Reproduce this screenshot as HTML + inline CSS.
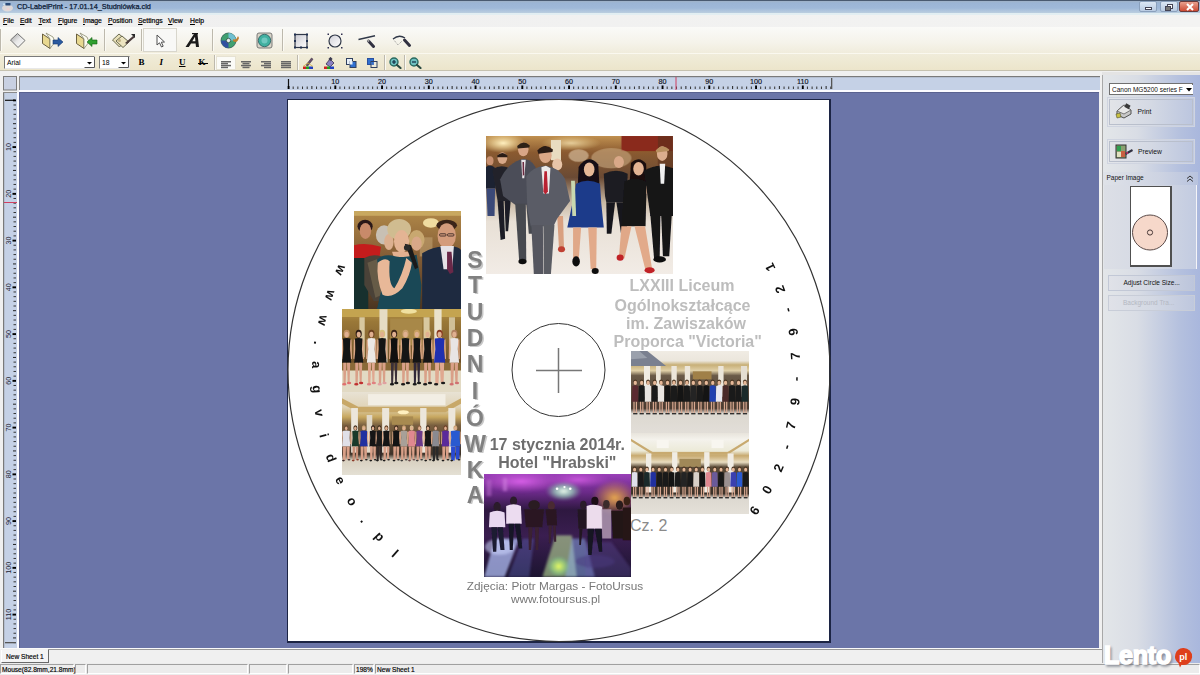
<!DOCTYPE html>
<html><head><meta charset="utf-8">
<style>
*{margin:0;padding:0;box-sizing:border-box}
html,body{width:1200px;height:675px;overflow:hidden;background:#f0f0f0;font-family:"Liberation Sans",sans-serif;position:relative}
.a{position:absolute}
.t{position:absolute;white-space:nowrap;line-height:1}
#title{left:0;top:0;width:1200px;height:15px;background:linear-gradient(#4a5a70 0,#4a5a70 1px,#a0b2c8 1px,#9cb5d5 3px,#9fb8d8 8px,#b6cadf 12px,#bdd0de 13.5px,#e2eef2 13.5px,#e2eef2 15px)}
#menu{left:0;top:15px;width:1200px;height:12px;background:linear-gradient(90deg,#efefef,#f3f3f2)}
#menu .t{top:3px;font-size:6.8px;color:#000;-webkit-text-stroke:0.2px #000}
#menu u{text-decoration:underline;text-decoration-thickness:0.7px;text-underline-offset:0.5px}
#tb1{left:0;top:27px;width:1200px;height:26px;background:linear-gradient(#fafaf8,#f5f3ea 60%,#f0ecdc)}
#tb2{left:0;top:53px;width:1200px;height:18px;background:linear-gradient(#f0ecda,#ece5cb);border-top:1px solid #faf8ef;border-bottom:1px solid #c6c2b0}
.sep{position:absolute;width:2px;background:#bdb9ad;border-right:1px solid #fbfaf4}
#ruler{left:3px;top:76px;width:1097px;height:16px}
#canvas{left:19px;top:92px;width:1080px;height:556px;background:#6b75a8;box-shadow:inset 1px 1px 0 #5a6290}
#rpanel{left:1101px;top:72px;width:99px;height:578px;background:linear-gradient(90deg,#e6e8eb 0%,#d5d9e4 40%,#abbade 100%);border-left:1px solid #9a9a9a}
#tabs{left:0;top:648px;width:1200px;height:15px;background:#ececec}
#status{left:0;top:663px;width:1200px;height:12px;background:#ececec}
.sp{position:absolute;top:1px;height:10px;border-top:1px solid #a0a0a0;border-left:1px solid #a0a0a0;border-right:1px solid #fff;border-bottom:1px solid #fff}
.sp .t{font-size:6.6px;color:#000;top:2px;left:1px;-webkit-text-stroke:0.15px #000}
.btn{position:absolute;border:1px solid #c9ceda;background:linear-gradient(#e2e6ee,#d2d8e6)}
</style></head><body>
<div id="title" class="a">
  <svg class="a" style="left:1px;top:1px" width="13" height="12" viewBox="0 0 13 12"><ellipse cx="6.5" cy="7" rx="5.5" ry="3.5" fill="#e4dcd8" opacity="0.9"/><rect x="4.5" y="2" width="5" height="2.5" fill="#2a4a78"/><rect x="2" y="2.5" width="2" height="1.5" fill="#c8e0f0"/><ellipse cx="7" cy="8" rx="1.5" ry="1" fill="#f0d0d0"/></svg>
  <span class="t" style="left:17px;top:3px;font-size:7.3px;color:#0e1c36;-webkit-text-stroke:0.25px #0e1c36">CD-LabelPrint - 17.01.14_Studniówka.cld</span>
  <div class="a" style="left:1139px;top:1px;width:18px;height:11px;border:1px solid #8aa0bc;border-radius:2px;background:linear-gradient(#dbe6f3,#b9cbe2)"><div class="a" style="left:5px;top:5px;width:7px;height:3px;background:#fff;border:1px solid #445"></div></div>
  <div class="a" style="left:1160px;top:1px;width:18px;height:11px;border:1px solid #8aa0bc;border-radius:2px;background:linear-gradient(#dbe6f3,#b9cbe2)"><div class="a" style="left:6px;top:2px;width:6px;height:5px;border:1px solid #445;background:#fff"></div><div class="a" style="left:4px;top:4px;width:6px;height:5px;border:1px solid #445;background:#777"></div></div>
  <div class="a" style="left:1179px;top:1px;width:20px;height:11px;border:1px solid #6a3a3a;border-radius:2px;background:linear-gradient(#e9a08e,#cc4a34)"><svg class="a" style="left:6px;top:1px" width="8" height="8"><path d="M1 1L7 7M7 1L1 7" stroke="#fff" stroke-width="2"/></svg></div>
</div>
<div id="menu" class="a">
<span class="t" style="left:3px"><u>F</u>ile</span><span class="t" style="left:20px"><u>E</u>dit</span><span class="t" style="left:38.5px"><u>T</u>ext</span><span class="t" style="left:58px"><u>F</u>igure</span><span class="t" style="left:83px"><u>I</u>mage</span><span class="t" style="left:108px"><u>P</u>osition</span><span class="t" style="left:138px"><u>S</u>ettings</span><span class="t" style="left:168px"><u>V</u>iew</span><span class="t" style="left:190px"><u>H</u>elp</span>
</div>
<div id="tb1" class="a">
  <div class="sep" style="left:0;top:2px;height:22px"></div>
  <div class="sep" style="left:104px;top:2px;height:22px"></div>
  <div class="sep" style="left:141px;top:2px;height:22px"></div>
  <div class="sep" style="left:212px;top:2px;height:22px"></div>
  <div class="sep" style="left:282px;top:2px;height:22px"></div>
  <div class="a" style="left:143px;top:1px;width:34px;height:24px;background:#f8f8f6;border:1px solid #d8d6cc"></div>
  <!-- new (diamond) -->
<svg class="a" style="left:9px;top:5px" width="18" height="17" viewBox="0 0 18 17"><defs><linearGradient id="ic1" x1="0" y1="0" x2="1" y2="1"><stop offset="0" stop-color="#9a9a9a"/><stop offset="0.5" stop-color="#e8e8e8"/><stop offset="1" stop-color="#fff"/></linearGradient></defs><path d="M1.5 8 L8.5 1.5 L16 8.5 L9 15.5Z" fill="url(#ic1)" stroke="#707070" stroke-width="1"/></svg>
<!-- open folder blue arrow -->
<svg class="a" style="left:41px;top:5px" width="24" height="18" viewBox="0 0 24 18"><path d="M1.5 2 L9 7 L9 16.5 L1.5 11.5Z" fill="#e8d890" stroke="#6a6040" stroke-width="1"/><path d="M5 1 L12 5 L14 10 L9 16.5 L9 7Z" fill="#fbfbf0" stroke="#8a8a70" stroke-width="0.8"/><path d="M12 8 L17 8 L17 5.5 L22 10 L17 14.5 L17 12 L12 12Z" fill="#2a5aa0" stroke="#1a3a70" stroke-width="0.6"/></svg>
<!-- folder green arrow -->
<svg class="a" style="left:75px;top:5px" width="24" height="18" viewBox="0 0 24 18"><path d="M1.5 2 L9 7 L9 16.5 L1.5 11.5Z" fill="#e8d890" stroke="#6a6040" stroke-width="1"/><path d="M5 1 L12 5 L14 10 L9 16.5 L9 7Z" fill="#fbfbf0" stroke="#8a8a70" stroke-width="0.8"/><path d="M22 8 L17 8 L17 5.5 L12 10 L17 14.5 L17 12 L22 12Z" fill="#30a030" stroke="#106010" stroke-width="0.6"/></svg>
<!-- label icon -->
<svg class="a" style="left:111px;top:5px" width="25" height="17" viewBox="0 0 25 17"><path d="M1.5 8 L8 2 L15 8 L8.5 15Z" fill="#e8e0b8" stroke="#6a6a50" stroke-width="1"/><path d="M5 9 L11 4 L18 10 L12 15.5Z" fill="#ece4c0" stroke="#6a6a50" stroke-width="1"/><circle cx="8.5" cy="8.5" r="1.5" fill="#c0b080"/><path d="M14 11 L22 4 L24 5 L16 12Z" fill="#4a3a3a"/><path d="M20 2 L24 2 L24 6Z" fill="#2a2a2a"/></svg>
<!-- pointer -->
<svg class="a" style="left:155px;top:7px" width="12" height="14" viewBox="0 0 12 14"><path d="M2 1 L2 11 L4.5 8.8 L6.5 13 L8.2 12.2 L6.3 8.2 L9.5 8 Z" fill="#fff" stroke="#505050" stroke-width="1"/></svg>
<!-- text A -->
<svg class="a" style="left:185px;top:6px" width="17" height="15" viewBox="0 0 17 15"><path d="M0.5 14 L9 1 L12.5 1 L14 14 L11 14 L10.6 10.5 L6 10.5 L3.8 14Z M7.3 8.3 L10.4 8.3 L10 3.8Z" fill="#1a1a1a"/><rect x="7" y="0" width="6" height="1.2" fill="#1a1a1a"/></svg>
<!-- CD icon 1 -->
<svg class="a" style="left:220px;top:5px" width="20" height="17" viewBox="0 0 20 17"><circle cx="8.5" cy="8.5" r="7.5" fill="#40a070" stroke="#2a5a50" stroke-width="0.8"/><path d="M8.5 1 A7.5 7.5 0 0 1 16 8.5 L8.5 8.5Z" fill="#70c0d0"/><path d="M1 8.5 A7.5 7.5 0 0 0 8.5 16 L8.5 8.5Z" fill="#3050a0"/><circle cx="8.5" cy="8.5" r="2.2" fill="#e8f0f0" stroke="#2a4a40" stroke-width="0.8"/><path d="M13 9 Q17 12 19 6 L18 4 Q16 9 13 7Z" fill="#c08030"/></svg>
<!-- CD icon 2 -->
<svg class="a" style="left:256px;top:5px" width="17" height="17" viewBox="0 0 17 17"><rect x="1" y="1" width="15" height="15" rx="2" fill="#d8d4c8" stroke="#606060" stroke-width="0.8"/><circle cx="8.5" cy="8.5" r="6.2" fill="#40b0a0" stroke="#2a5a60" stroke-width="0.8"/><circle cx="8.5" cy="8.5" r="3" fill="#70c8c0"/></svg>
<!-- rect -->
<svg class="a" style="left:293px;top:6px" width="16" height="16" viewBox="0 0 16 16"><defs><linearGradient id="ic2" x1="0" y1="0" x2="1" y2="1"><stop offset="0" stop-color="#c8c8d0"/><stop offset="1" stop-color="#fff"/></linearGradient></defs><rect x="2" y="1.5" width="12" height="13" fill="url(#ic2)" stroke="#303848" stroke-width="1.2"/><rect x="1" y="0.5" width="2" height="2" fill="#203050"/><rect x="13" y="0.5" width="2" height="2" fill="#203050"/><rect x="1" y="13.5" width="2" height="2" fill="#203050"/><rect x="13" y="13.5" width="2" height="2" fill="#203050"/><rect x="1" y="7" width="2" height="2" fill="#203050"/><rect x="13" y="7" width="2" height="2" fill="#203050"/><rect x="7" y="13.5" width="2" height="2" fill="#203050"/></svg>
<!-- circle -->
<svg class="a" style="left:327px;top:6px" width="16" height="16" viewBox="0 0 16 16"><defs><linearGradient id="ic3" x1="0" y1="0" x2="1" y2="1"><stop offset="0" stop-color="#d0d0d8"/><stop offset="1" stop-color="#fff"/></linearGradient></defs><circle cx="8" cy="8" r="6" fill="url(#ic3)" stroke="#303848" stroke-width="1.2"/><rect x="0.5" y="0.5" width="1.5" height="1.5" fill="#303050"/><rect x="14" y="0.5" width="1.5" height="1.5" fill="#303050"/><rect x="0.5" y="14" width="1.5" height="1.5" fill="#303050"/><rect x="14" y="14" width="1.5" height="1.5" fill="#303050"/></svg>
<!-- line -->
<svg class="a" style="left:358px;top:8px" width="19" height="13" viewBox="0 0 19 13"><path d="M0.5 4.5 L17 0.8" stroke="#303848" stroke-width="1.4"/><path d="M10.5 6 L15.5 11.5" stroke="#303040" stroke-width="3" stroke-linecap="round"/><path d="M9.5 5 L11 6.5" stroke="#a0a0a0" stroke-width="2"/></svg>
<!-- arc -->
<svg class="a" style="left:392px;top:8px" width="20" height="13" viewBox="0 0 20 13"><path d="M1 4 Q7 -1 13 3" stroke="#303848" stroke-width="1.3" fill="none"/><path d="M1.5 4.5 L6 10 L10 6" stroke="#808080" stroke-width="0.8" stroke-dasharray="1,1" fill="none"/><path d="M12.5 5 L17.5 10.5" stroke="#303040" stroke-width="3" stroke-linecap="round"/></svg>

</div>
<div id="tb2" class="a">
  <div class="a" style="left:4px;top:2px;width:91px;height:13px;background:#fff;border-top:1px solid #7a7a7a;border-left:1px solid #7a7a7a;border-right:1px solid #e8e8e8;border-bottom:1px solid #e8e8e8"><span class="t" style="left:2px;top:2.5px;font-size:6.8px;color:#000">Arial</span><svg class="a" style="left:79px;top:0px" width="11" height="11"><rect x="0" y="0" width="11" height="11" fill="#fff"/><path d="M3 5H8L5.5 7.5Z" fill="#000"/><path d="M0.5 10.5H10.5V0" stroke="#555" stroke-width="1" fill="none"/></svg></div>
  <div class="a" style="left:99px;top:2px;width:31px;height:13px;background:#fff;border-top:1px solid #7a7a7a;border-left:1px solid #7a7a7a;border-right:1px solid #e8e8e8;border-bottom:1px solid #e8e8e8"><span class="t" style="left:2px;top:2.5px;font-size:6.8px;color:#000">18</span><svg class="a" style="left:18px;top:0px" width="11" height="11"><rect x="0" y="0" width="11" height="11" fill="#fff"/><path d="M3 5H8L5.5 7.5Z" fill="#000"/><path d="M0.5 10.5H10.5V0" stroke="#555" stroke-width="1" fill="none"/></svg></div>
  <div class="sep" style="left:214px;top:1px;height:15px"></div>
  <div class="sep" style="left:297px;top:1px;height:15px"></div>
  <div class="sep" style="left:384px;top:1px;height:15px"></div>
  <div class="sep" style="left:404px;top:1px;height:15px"></div>
  <div class="a" style="left:216px;top:2px;width:20px;height:14px;background:#fbfbf7;border:1px solid #e6e2d2"></div>
  <span class="t" style="left:138.5px;top:4px;font-size:9px;font-weight:bold;font-family:'Liberation Serif',serif;color:#000">B</span>
<span class="t" style="left:159.5px;top:4px;font-size:9px;font-weight:bold;font-style:italic;font-family:'Liberation Serif',serif;color:#000">I</span>
<span class="t" style="left:179px;top:4px;font-size:9px;font-weight:bold;font-family:'Liberation Serif',serif;color:#000;text-decoration:underline">U</span>
<span class="t" style="left:198.5px;top:4px;font-size:9px;font-weight:bold;font-family:'Liberation Serif',serif;color:#000">K</span>
<div class="a" style="left:198px;top:9px;width:10px;height:1px;background:#000"></div>
<!-- align icons -->
<svg class="a" style="left:221px;top:6.5px" width="10" height="8"><rect x="0" y="0.0" width="10" height="1.5" fill="#666"/><rect x="0" y="1.9" width="7" height="1.5" fill="#666"/><rect x="0" y="3.8" width="10" height="1.5" fill="#666"/><rect x="0" y="5.7" width="7" height="1.5" fill="#666"/></svg>
<svg class="a" style="left:240.5px;top:6.5px" width="10" height="8"><rect x="0.0" y="0.0" width="10" height="1.5" fill="#666"/><rect x="1.5" y="1.9" width="7" height="1.5" fill="#666"/><rect x="0.0" y="3.8" width="10" height="1.5" fill="#666"/><rect x="1.5" y="5.7" width="7" height="1.5" fill="#666"/></svg>
<svg class="a" style="left:260.5px;top:6.5px" width="10" height="8"><rect x="0" y="0.0" width="10" height="1.5" fill="#666"/><rect x="3" y="1.9" width="7" height="1.5" fill="#666"/><rect x="0" y="3.8" width="10" height="1.5" fill="#666"/><rect x="3" y="5.7" width="7" height="1.5" fill="#666"/></svg>
<svg class="a" style="left:280.5px;top:6.5px" width="10" height="8"><rect x="0" y="0.0" width="10" height="1.5" fill="#666"/><rect x="0" y="1.9" width="10" height="1.5" fill="#666"/><rect x="0" y="3.8" width="10" height="1.5" fill="#666"/><rect x="0" y="5.7" width="10" height="1.5" fill="#666"/></svg>
<!-- pen -->
<svg class="a" style="left:303px;top:3px" width="11" height="12" viewBox="0 0 11 12"><path d="M3 8 L8.5 1 L10 2.2 L4.5 9.2Z" fill="#6a5070" stroke="#3a3040" stroke-width="0.6"/><rect x="0" y="9.5" width="3" height="2.5" fill="#d02020"/><rect x="3" y="9.5" width="3" height="2.5" fill="#20a020"/><rect x="6" y="9.5" width="4" height="2.5" fill="#2040c0"/><path d="M0 9.5 L5 6 L10 9.5" fill="none" stroke="#d0b040" stroke-width="0.8"/></svg>
<!-- fill -->
<svg class="a" style="left:324px;top:3px" width="11" height="12" viewBox="0 0 11 12"><path d="M2 7 L6 2 L10 6 L6 10Z" fill="#8a80c0" stroke="#3a3050" stroke-width="0.8"/><rect x="5" y="0.5" width="3" height="3" fill="#3a3a50" transform="rotate(45 6.5 2)"/><rect x="0" y="9.5" width="3" height="2.5" fill="#d02020"/><rect x="3" y="9.5" width="3" height="2.5" fill="#20a020"/><rect x="6" y="9.5" width="4" height="2.5" fill="#2040c0"/></svg>
<!-- bring forward -->
<svg class="a" style="left:346px;top:4px" width="11" height="10" viewBox="0 0 11 10"><rect x="0.5" y="0.5" width="6" height="6" fill="#e8f0f8" stroke="#304060" stroke-width="1"/><rect x="4" y="3.5" width="6" height="6" fill="#3070d0" stroke="#304060" stroke-width="1"/><rect x="3.5" y="3" width="3" height="3.5" fill="#e8f0f8"/></svg>
<!-- send back -->
<svg class="a" style="left:367px;top:4px" width="11" height="10" viewBox="0 0 11 10"><rect x="0.5" y="0.5" width="6" height="6" fill="#3070d0" stroke="#2a50a0" stroke-width="1"/><rect x="4" y="3.5" width="6" height="6" fill="#f0f4f8" stroke="#304060" stroke-width="1" fill-opacity="0.3"/><rect x="4.5" y="4" width="2" height="2.5" fill="#3070d0"/></svg>
<!-- zoom in -->
<svg class="a" style="left:389px;top:3px" width="13" height="12" viewBox="0 0 13 12"><circle cx="5" cy="5" r="4" fill="#70c0c0" stroke="#2a6a60" stroke-width="1.4"/><path d="M8 8 L11.5 11" stroke="#2a4a40" stroke-width="2.2" stroke-linecap="round"/><path d="M3 5H7M5 3V7" stroke="#102a40" stroke-width="1.2"/></svg>
<!-- zoom out -->
<svg class="a" style="left:409px;top:3px" width="13" height="12" viewBox="0 0 13 12"><circle cx="5" cy="5" r="4" fill="#70c0c0" stroke="#2a6a60" stroke-width="1.4"/><path d="M8 8 L11.5 11" stroke="#2a4a40" stroke-width="2.2" stroke-linecap="round"/><path d="M3 5H7" stroke="#102a40" stroke-width="1.2"/></svg>

</div>
<div id="canvas" class="a"></div>
<svg class="a" style="left:0;top:72px" width="1101" height="20">
<rect x="3.5" y="4.5" width="13" height="13.5" fill="#c8d0e2" stroke="#7c7c7c" stroke-width="1"/>
<rect x="19" y="4" width="1081" height="15" fill="#c5d1e6"/>
<rect x="19" y="4" width="1081" height="1.2" fill="#7a7a7a"/>
<rect x="19" y="4" width="1" height="14" fill="#8a8a8a"/>
<rect x="19" y="18" width="1081" height="2" fill="#fbfbff"/>
<rect x="287.90" y="7" width="1.2" height="10" fill="#111"/>
<rect x="287.70" y="14" width="1.8" height="3" fill="#000"/>
<rect x="292.68" y="14.5" width="1" height="2.5" fill="#333"/>
<rect x="297.35" y="14.5" width="1" height="2.5" fill="#333"/>
<rect x="302.02" y="14.5" width="1" height="2.5" fill="#333"/>
<rect x="306.70" y="14.5" width="1" height="2.5" fill="#333"/>
<rect x="311.38" y="14" width="1" height="3" fill="#222"/>
<rect x="316.05" y="14.5" width="1" height="2.5" fill="#333"/>
<rect x="320.73" y="14.5" width="1" height="2.5" fill="#333"/>
<rect x="325.40" y="14.5" width="1" height="2.5" fill="#333"/>
<rect x="330.07" y="14.5" width="1" height="2.5" fill="#333"/>
<rect x="334.35" y="13.5" width="1.9" height="3.5" fill="#000"/>
<text x="335.25" y="12.3" font-size="7.2" text-anchor="middle" fill="#0a1020" stroke="#0a1020" stroke-width="0.15">10</text>
<rect x="339.43" y="14.5" width="1" height="2.5" fill="#333"/>
<rect x="344.10" y="14.5" width="1" height="2.5" fill="#333"/>
<rect x="348.77" y="14.5" width="1" height="2.5" fill="#333"/>
<rect x="353.45" y="14.5" width="1" height="2.5" fill="#333"/>
<rect x="358.12" y="14" width="1" height="3" fill="#222"/>
<rect x="362.80" y="14.5" width="1" height="2.5" fill="#333"/>
<rect x="367.48" y="14.5" width="1" height="2.5" fill="#333"/>
<rect x="372.15" y="14.5" width="1" height="2.5" fill="#333"/>
<rect x="376.82" y="14.5" width="1" height="2.5" fill="#333"/>
<rect x="381.10" y="13.5" width="1.9" height="3.5" fill="#000"/>
<text x="382.00" y="12.3" font-size="7.2" text-anchor="middle" fill="#0a1020" stroke="#0a1020" stroke-width="0.15">20</text>
<rect x="386.18" y="14.5" width="1" height="2.5" fill="#333"/>
<rect x="390.85" y="14.5" width="1" height="2.5" fill="#333"/>
<rect x="395.52" y="14.5" width="1" height="2.5" fill="#333"/>
<rect x="400.20" y="14.5" width="1" height="2.5" fill="#333"/>
<rect x="404.88" y="14" width="1" height="3" fill="#222"/>
<rect x="409.55" y="14.5" width="1" height="2.5" fill="#333"/>
<rect x="414.23" y="14.5" width="1" height="2.5" fill="#333"/>
<rect x="418.90" y="14.5" width="1" height="2.5" fill="#333"/>
<rect x="423.57" y="14.5" width="1" height="2.5" fill="#333"/>
<rect x="427.85" y="13.5" width="1.9" height="3.5" fill="#000"/>
<text x="428.75" y="12.3" font-size="7.2" text-anchor="middle" fill="#0a1020" stroke="#0a1020" stroke-width="0.15">30</text>
<rect x="432.92" y="14.5" width="1" height="2.5" fill="#333"/>
<rect x="437.60" y="14.5" width="1" height="2.5" fill="#333"/>
<rect x="442.27" y="14.5" width="1" height="2.5" fill="#333"/>
<rect x="446.95" y="14.5" width="1" height="2.5" fill="#333"/>
<rect x="451.62" y="14" width="1" height="3" fill="#222"/>
<rect x="456.30" y="14.5" width="1" height="2.5" fill="#333"/>
<rect x="460.98" y="14.5" width="1" height="2.5" fill="#333"/>
<rect x="465.65" y="14.5" width="1" height="2.5" fill="#333"/>
<rect x="470.32" y="14.5" width="1" height="2.5" fill="#333"/>
<rect x="474.60" y="13.5" width="1.9" height="3.5" fill="#000"/>
<text x="475.50" y="12.3" font-size="7.2" text-anchor="middle" fill="#0a1020" stroke="#0a1020" stroke-width="0.15">40</text>
<rect x="479.67" y="14.5" width="1" height="2.5" fill="#333"/>
<rect x="484.35" y="14.5" width="1" height="2.5" fill="#333"/>
<rect x="489.02" y="14.5" width="1" height="2.5" fill="#333"/>
<rect x="493.70" y="14.5" width="1" height="2.5" fill="#333"/>
<rect x="498.38" y="14" width="1" height="3" fill="#222"/>
<rect x="503.05" y="14.5" width="1" height="2.5" fill="#333"/>
<rect x="507.73" y="14.5" width="1" height="2.5" fill="#333"/>
<rect x="512.40" y="14.5" width="1" height="2.5" fill="#333"/>
<rect x="517.08" y="14.5" width="1" height="2.5" fill="#333"/>
<rect x="521.35" y="13.5" width="1.9" height="3.5" fill="#000"/>
<text x="522.25" y="12.3" font-size="7.2" text-anchor="middle" fill="#0a1020" stroke="#0a1020" stroke-width="0.15">50</text>
<rect x="526.42" y="14.5" width="1" height="2.5" fill="#333"/>
<rect x="531.10" y="14.5" width="1" height="2.5" fill="#333"/>
<rect x="535.77" y="14.5" width="1" height="2.5" fill="#333"/>
<rect x="540.45" y="14.5" width="1" height="2.5" fill="#333"/>
<rect x="545.12" y="14" width="1" height="3" fill="#222"/>
<rect x="549.80" y="14.5" width="1" height="2.5" fill="#333"/>
<rect x="554.47" y="14.5" width="1" height="2.5" fill="#333"/>
<rect x="559.15" y="14.5" width="1" height="2.5" fill="#333"/>
<rect x="563.83" y="14.5" width="1" height="2.5" fill="#333"/>
<rect x="568.10" y="13.5" width="1.9" height="3.5" fill="#000"/>
<text x="569.00" y="12.3" font-size="7.2" text-anchor="middle" fill="#0a1020" stroke="#0a1020" stroke-width="0.15">60</text>
<rect x="573.17" y="14.5" width="1" height="2.5" fill="#333"/>
<rect x="577.85" y="14.5" width="1" height="2.5" fill="#333"/>
<rect x="582.52" y="14.5" width="1" height="2.5" fill="#333"/>
<rect x="587.20" y="14.5" width="1" height="2.5" fill="#333"/>
<rect x="591.88" y="14" width="1" height="3" fill="#222"/>
<rect x="596.55" y="14.5" width="1" height="2.5" fill="#333"/>
<rect x="601.22" y="14.5" width="1" height="2.5" fill="#333"/>
<rect x="605.90" y="14.5" width="1" height="2.5" fill="#333"/>
<rect x="610.58" y="14.5" width="1" height="2.5" fill="#333"/>
<rect x="614.85" y="13.5" width="1.9" height="3.5" fill="#000"/>
<text x="615.75" y="12.3" font-size="7.2" text-anchor="middle" fill="#0a1020" stroke="#0a1020" stroke-width="0.15">70</text>
<rect x="619.92" y="14.5" width="1" height="2.5" fill="#333"/>
<rect x="624.60" y="14.5" width="1" height="2.5" fill="#333"/>
<rect x="629.27" y="14.5" width="1" height="2.5" fill="#333"/>
<rect x="633.95" y="14.5" width="1" height="2.5" fill="#333"/>
<rect x="638.62" y="14" width="1" height="3" fill="#222"/>
<rect x="643.30" y="14.5" width="1" height="2.5" fill="#333"/>
<rect x="647.97" y="14.5" width="1" height="2.5" fill="#333"/>
<rect x="652.65" y="14.5" width="1" height="2.5" fill="#333"/>
<rect x="657.33" y="14.5" width="1" height="2.5" fill="#333"/>
<rect x="661.60" y="13.5" width="1.9" height="3.5" fill="#000"/>
<text x="662.50" y="12.3" font-size="7.2" text-anchor="middle" fill="#0a1020" stroke="#0a1020" stroke-width="0.15">80</text>
<rect x="666.67" y="14.5" width="1" height="2.5" fill="#333"/>
<rect x="671.35" y="14.5" width="1" height="2.5" fill="#333"/>
<rect x="676.02" y="14.5" width="1" height="2.5" fill="#333"/>
<rect x="680.70" y="14.5" width="1" height="2.5" fill="#333"/>
<rect x="685.38" y="14" width="1" height="3" fill="#222"/>
<rect x="690.05" y="14.5" width="1" height="2.5" fill="#333"/>
<rect x="694.72" y="14.5" width="1" height="2.5" fill="#333"/>
<rect x="699.40" y="14.5" width="1" height="2.5" fill="#333"/>
<rect x="704.08" y="14.5" width="1" height="2.5" fill="#333"/>
<rect x="708.35" y="13.5" width="1.9" height="3.5" fill="#000"/>
<text x="709.25" y="12.3" font-size="7.2" text-anchor="middle" fill="#0a1020" stroke="#0a1020" stroke-width="0.15">90</text>
<rect x="713.42" y="14.5" width="1" height="2.5" fill="#333"/>
<rect x="718.10" y="14.5" width="1" height="2.5" fill="#333"/>
<rect x="722.77" y="14.5" width="1" height="2.5" fill="#333"/>
<rect x="727.45" y="14.5" width="1" height="2.5" fill="#333"/>
<rect x="732.12" y="14" width="1" height="3" fill="#222"/>
<rect x="736.80" y="14.5" width="1" height="2.5" fill="#333"/>
<rect x="741.47" y="14.5" width="1" height="2.5" fill="#333"/>
<rect x="746.15" y="14.5" width="1" height="2.5" fill="#333"/>
<rect x="750.83" y="14.5" width="1" height="2.5" fill="#333"/>
<rect x="755.10" y="13.5" width="1.9" height="3.5" fill="#000"/>
<text x="756.00" y="12.3" font-size="7.2" text-anchor="middle" fill="#0a1020" stroke="#0a1020" stroke-width="0.15">100</text>
<rect x="760.17" y="14.5" width="1" height="2.5" fill="#333"/>
<rect x="764.85" y="14.5" width="1" height="2.5" fill="#333"/>
<rect x="769.52" y="14.5" width="1" height="2.5" fill="#333"/>
<rect x="774.20" y="14.5" width="1" height="2.5" fill="#333"/>
<rect x="778.88" y="14" width="1" height="3" fill="#222"/>
<rect x="783.55" y="14.5" width="1" height="2.5" fill="#333"/>
<rect x="788.22" y="14.5" width="1" height="2.5" fill="#333"/>
<rect x="792.90" y="14.5" width="1" height="2.5" fill="#333"/>
<rect x="797.58" y="14.5" width="1" height="2.5" fill="#333"/>
<rect x="801.85" y="13.5" width="1.9" height="3.5" fill="#000"/>
<text x="802.75" y="12.3" font-size="7.2" text-anchor="middle" fill="#0a1020" stroke="#0a1020" stroke-width="0.15">110</text>
<rect x="806.92" y="14.5" width="1" height="2.5" fill="#333"/>
<rect x="811.60" y="14.5" width="1" height="2.5" fill="#333"/>
<rect x="816.27" y="14.5" width="1" height="2.5" fill="#333"/>
<rect x="820.95" y="14.5" width="1" height="2.5" fill="#333"/>
<rect x="825.62" y="14" width="1" height="3" fill="#222"/>
<rect x="830.30" y="14.5" width="1" height="2.5" fill="#333"/>
<rect x="831" y="6" width="1.3" height="11" fill="#555"/>
<rect x="675.5" y="5" width="1" height="13" fill="#d04060"/>
</svg>
<svg class="a" style="left:0;top:92px" width="20" height="558">
<rect x="3" y="0" width="14" height="556" fill="#c5d1e6"/>
<rect x="3" y="0" width="1.2" height="556" fill="#7a7a7a"/>
<rect x="3" y="0" width="14" height="1" fill="#8a8a8a"/>
<rect x="17" y="0" width="2" height="556" fill="#fbfbff"/>
<rect x="5" y="7.70" width="10" height="1.2" fill="#111"/>
<rect x="13" y="7.50" width="3" height="1.8" fill="#000"/>
<rect x="13.5" y="12.47" width="2.5" height="1" fill="#333"/>
<rect x="13.5" y="17.15" width="2.5" height="1" fill="#333"/>
<rect x="13.5" y="21.82" width="2.5" height="1" fill="#333"/>
<rect x="13.5" y="26.50" width="2.5" height="1" fill="#333"/>
<rect x="13" y="31.17" width="3" height="1" fill="#222"/>
<rect x="13.5" y="35.85" width="2.5" height="1" fill="#333"/>
<rect x="13.5" y="40.52" width="2.5" height="1" fill="#333"/>
<rect x="13.5" y="45.20" width="2.5" height="1" fill="#333"/>
<rect x="13.5" y="49.87" width="2.5" height="1" fill="#333"/>
<rect x="12.5" y="54.15" width="3.5" height="1.9" fill="#000"/>
<text x="0" y="0" font-size="7.2" text-anchor="middle" fill="#1a2030" transform="translate(11.3 55.05) rotate(-90)">10</text>
<rect x="13.5" y="59.22" width="2.5" height="1" fill="#333"/>
<rect x="13.5" y="63.90" width="2.5" height="1" fill="#333"/>
<rect x="13.5" y="68.57" width="2.5" height="1" fill="#333"/>
<rect x="13.5" y="73.25" width="2.5" height="1" fill="#333"/>
<rect x="13" y="77.92" width="3" height="1" fill="#222"/>
<rect x="13.5" y="82.60" width="2.5" height="1" fill="#333"/>
<rect x="13.5" y="87.27" width="2.5" height="1" fill="#333"/>
<rect x="13.5" y="91.95" width="2.5" height="1" fill="#333"/>
<rect x="13.5" y="96.62" width="2.5" height="1" fill="#333"/>
<rect x="12.5" y="100.90" width="3.5" height="1.9" fill="#000"/>
<text x="0" y="0" font-size="7.2" text-anchor="middle" fill="#1a2030" transform="translate(11.3 101.80) rotate(-90)">20</text>
<rect x="13.5" y="105.97" width="2.5" height="1" fill="#333"/>
<rect x="13.5" y="110.65" width="2.5" height="1" fill="#333"/>
<rect x="13.5" y="115.32" width="2.5" height="1" fill="#333"/>
<rect x="13.5" y="120.00" width="2.5" height="1" fill="#333"/>
<rect x="13" y="124.67" width="3" height="1" fill="#222"/>
<rect x="13.5" y="129.35" width="2.5" height="1" fill="#333"/>
<rect x="13.5" y="134.02" width="2.5" height="1" fill="#333"/>
<rect x="13.5" y="138.70" width="2.5" height="1" fill="#333"/>
<rect x="13.5" y="143.38" width="2.5" height="1" fill="#333"/>
<rect x="12.5" y="147.65" width="3.5" height="1.9" fill="#000"/>
<text x="0" y="0" font-size="7.2" text-anchor="middle" fill="#1a2030" transform="translate(11.3 148.55) rotate(-90)">30</text>
<rect x="13.5" y="152.72" width="2.5" height="1" fill="#333"/>
<rect x="13.5" y="157.40" width="2.5" height="1" fill="#333"/>
<rect x="13.5" y="162.07" width="2.5" height="1" fill="#333"/>
<rect x="13.5" y="166.75" width="2.5" height="1" fill="#333"/>
<rect x="13" y="171.43" width="3" height="1" fill="#222"/>
<rect x="13.5" y="176.10" width="2.5" height="1" fill="#333"/>
<rect x="13.5" y="180.77" width="2.5" height="1" fill="#333"/>
<rect x="13.5" y="185.45" width="2.5" height="1" fill="#333"/>
<rect x="13.5" y="190.12" width="2.5" height="1" fill="#333"/>
<rect x="12.5" y="194.40" width="3.5" height="1.9" fill="#000"/>
<text x="0" y="0" font-size="7.2" text-anchor="middle" fill="#1a2030" transform="translate(11.3 195.30) rotate(-90)">40</text>
<rect x="13.5" y="199.47" width="2.5" height="1" fill="#333"/>
<rect x="13.5" y="204.15" width="2.5" height="1" fill="#333"/>
<rect x="13.5" y="208.82" width="2.5" height="1" fill="#333"/>
<rect x="13.5" y="213.50" width="2.5" height="1" fill="#333"/>
<rect x="13" y="218.18" width="3" height="1" fill="#222"/>
<rect x="13.5" y="222.85" width="2.5" height="1" fill="#333"/>
<rect x="13.5" y="227.52" width="2.5" height="1" fill="#333"/>
<rect x="13.5" y="232.20" width="2.5" height="1" fill="#333"/>
<rect x="13.5" y="236.88" width="2.5" height="1" fill="#333"/>
<rect x="12.5" y="241.15" width="3.5" height="1.9" fill="#000"/>
<text x="0" y="0" font-size="7.2" text-anchor="middle" fill="#1a2030" transform="translate(11.3 242.05) rotate(-90)">50</text>
<rect x="13.5" y="246.22" width="2.5" height="1" fill="#333"/>
<rect x="13.5" y="250.90" width="2.5" height="1" fill="#333"/>
<rect x="13.5" y="255.57" width="2.5" height="1" fill="#333"/>
<rect x="13.5" y="260.25" width="2.5" height="1" fill="#333"/>
<rect x="13" y="264.93" width="3" height="1" fill="#222"/>
<rect x="13.5" y="269.60" width="2.5" height="1" fill="#333"/>
<rect x="13.5" y="274.27" width="2.5" height="1" fill="#333"/>
<rect x="13.5" y="278.95" width="2.5" height="1" fill="#333"/>
<rect x="13.5" y="283.62" width="2.5" height="1" fill="#333"/>
<rect x="12.5" y="287.90" width="3.5" height="1.9" fill="#000"/>
<text x="0" y="0" font-size="7.2" text-anchor="middle" fill="#1a2030" transform="translate(11.3 288.80) rotate(-90)">60</text>
<rect x="13.5" y="292.98" width="2.5" height="1" fill="#333"/>
<rect x="13.5" y="297.65" width="2.5" height="1" fill="#333"/>
<rect x="13.5" y="302.32" width="2.5" height="1" fill="#333"/>
<rect x="13.5" y="307.00" width="2.5" height="1" fill="#333"/>
<rect x="13" y="311.68" width="3" height="1" fill="#222"/>
<rect x="13.5" y="316.35" width="2.5" height="1" fill="#333"/>
<rect x="13.5" y="321.02" width="2.5" height="1" fill="#333"/>
<rect x="13.5" y="325.70" width="2.5" height="1" fill="#333"/>
<rect x="13.5" y="330.38" width="2.5" height="1" fill="#333"/>
<rect x="12.5" y="334.65" width="3.5" height="1.9" fill="#000"/>
<text x="0" y="0" font-size="7.2" text-anchor="middle" fill="#1a2030" transform="translate(11.3 335.55) rotate(-90)">70</text>
<rect x="13.5" y="339.73" width="2.5" height="1" fill="#333"/>
<rect x="13.5" y="344.40" width="2.5" height="1" fill="#333"/>
<rect x="13.5" y="349.07" width="2.5" height="1" fill="#333"/>
<rect x="13.5" y="353.75" width="2.5" height="1" fill="#333"/>
<rect x="13" y="358.43" width="3" height="1" fill="#222"/>
<rect x="13.5" y="363.10" width="2.5" height="1" fill="#333"/>
<rect x="13.5" y="367.77" width="2.5" height="1" fill="#333"/>
<rect x="13.5" y="372.45" width="2.5" height="1" fill="#333"/>
<rect x="13.5" y="377.12" width="2.5" height="1" fill="#333"/>
<rect x="12.5" y="381.40" width="3.5" height="1.9" fill="#000"/>
<text x="0" y="0" font-size="7.2" text-anchor="middle" fill="#1a2030" transform="translate(11.3 382.30) rotate(-90)">80</text>
<rect x="13.5" y="386.48" width="2.5" height="1" fill="#333"/>
<rect x="13.5" y="391.15" width="2.5" height="1" fill="#333"/>
<rect x="13.5" y="395.82" width="2.5" height="1" fill="#333"/>
<rect x="13.5" y="400.50" width="2.5" height="1" fill="#333"/>
<rect x="13" y="405.18" width="3" height="1" fill="#222"/>
<rect x="13.5" y="409.85" width="2.5" height="1" fill="#333"/>
<rect x="13.5" y="414.52" width="2.5" height="1" fill="#333"/>
<rect x="13.5" y="419.20" width="2.5" height="1" fill="#333"/>
<rect x="13.5" y="423.88" width="2.5" height="1" fill="#333"/>
<rect x="12.5" y="428.15" width="3.5" height="1.9" fill="#000"/>
<text x="0" y="0" font-size="7.2" text-anchor="middle" fill="#1a2030" transform="translate(11.3 429.05) rotate(-90)">90</text>
<rect x="13.5" y="433.23" width="2.5" height="1" fill="#333"/>
<rect x="13.5" y="437.90" width="2.5" height="1" fill="#333"/>
<rect x="13.5" y="442.57" width="2.5" height="1" fill="#333"/>
<rect x="13.5" y="447.25" width="2.5" height="1" fill="#333"/>
<rect x="13" y="451.93" width="3" height="1" fill="#222"/>
<rect x="13.5" y="456.60" width="2.5" height="1" fill="#333"/>
<rect x="13.5" y="461.27" width="2.5" height="1" fill="#333"/>
<rect x="13.5" y="465.95" width="2.5" height="1" fill="#333"/>
<rect x="13.5" y="470.62" width="2.5" height="1" fill="#333"/>
<rect x="12.5" y="474.90" width="3.5" height="1.9" fill="#000"/>
<text x="0" y="0" font-size="7.2" text-anchor="middle" fill="#1a2030" transform="translate(11.3 475.80) rotate(-90)">100</text>
<rect x="13.5" y="479.97" width="2.5" height="1" fill="#333"/>
<rect x="13.5" y="484.65" width="2.5" height="1" fill="#333"/>
<rect x="13.5" y="489.32" width="2.5" height="1" fill="#333"/>
<rect x="13.5" y="494.00" width="2.5" height="1" fill="#333"/>
<rect x="13" y="498.68" width="3" height="1" fill="#222"/>
<rect x="13.5" y="503.35" width="2.5" height="1" fill="#333"/>
<rect x="13.5" y="508.02" width="2.5" height="1" fill="#333"/>
<rect x="13.5" y="512.70" width="2.5" height="1" fill="#333"/>
<rect x="13.5" y="517.38" width="2.5" height="1" fill="#333"/>
<rect x="12.5" y="521.65" width="3.5" height="1.9" fill="#000"/>
<text x="0" y="0" font-size="7.2" text-anchor="middle" fill="#1a2030" transform="translate(11.3 522.55) rotate(-90)">110</text>
<rect x="13.5" y="526.72" width="2.5" height="1" fill="#333"/>
<rect x="13.5" y="531.40" width="2.5" height="1" fill="#333"/>
<rect x="13.5" y="536.07" width="2.5" height="1" fill="#333"/>
<rect x="13.5" y="540.75" width="2.5" height="1" fill="#333"/>
<rect x="13" y="545.42" width="3" height="1" fill="#222"/>
<rect x="13.5" y="550.10" width="2.5" height="1" fill="#333"/>
<rect x="5" y="550" width="11" height="1.3" fill="#555"/>
<rect x="4" y="110" width="13" height="1" fill="#d04060"/>
</svg>
<div class="a" style="left:287px;top:99px;width:544px;height:544px;background:#fff;border-left:1px solid #1c2444;border-top:1px solid #1c2444;border-right:2px solid #1c2444;border-bottom:2px solid #1c2444"></div>
<svg class="a" style="left:0;top:0" width="1100" height="650" viewBox="0 0 1100 650" font-family="Liberation Sans, sans-serif">
<circle cx="559" cy="370.5" r="271" fill="none" stroke="#333" stroke-width="1.2"/>
<text x="630" y="530.7" font-size="16" fill="#8a8a8a">Cz. 2</text>
<svg x="486" y="136" width="187" height="138" viewBox="62 62 743 548" preserveAspectRatio="none" overflow="hidden">
<defs><linearGradient id="p1bg" x1="0" y1="0" x2="0" y2="1"><stop offset="0" stop-color="#c09050"/><stop offset="0.12" stop-color="#8a5a30"/><stop offset="0.3" stop-color="#6a4a34"/><stop offset="0.48" stop-color="#c8b8a4"/><stop offset="0.62" stop-color="#e8e0d6"/><stop offset="1" stop-color="#f2ece6"/></linearGradient>
<radialGradient id="p1l" cx="0.5" cy="0.5" r="0.5"><stop offset="0" stop-color="#fff0c0"/><stop offset="1" stop-color="#ffe8a0" stop-opacity="0"/></radialGradient>
<filter id="p1f"><feGaussianBlur stdDeviation="3"/></filter></defs>
<rect x="62" y="62" width="743" height="548" fill="url(#p1bg)"/>
<g filter="url(#p1f)">
<rect x="600" y="62" width="205" height="60" fill="#8a2a1e"/>
<ellipse cx="130" cy="90" rx="90" ry="40" fill="url(#p1l)"/>
<ellipse cx="400" cy="90" rx="120" ry="30" fill="url(#p1l)" opacity="0.7"/>
<rect x="320" y="78" width="40" height="80" fill="#e8dcc0"/>
<rect x="745" y="62" width="60" height="300" fill="#5a3020" opacity="0.6"/>
<ellipse cx="560" cy="150" rx="80" ry="40" fill="#c8a880" opacity="0.6"/>
<ellipse cx="430" cy="140" rx="40" ry="25" fill="#e0c8a8" opacity="0.6"/>
</g>
<g filter="url(#p1f)" opacity="1">
<!-- far left person -->
<ellipse cx="78" cy="160" rx="14" ry="18" fill="#c89070"/>
<path d="M62 185 Q82 172 100 190 L100 270 L62 270Z" fill="#1e2230"/>
<path d="M64 270 L98 270 L96 380 L68 380Z" fill="#3a4a78"/>
<!-- boy 2 dark suit -->
<ellipse cx="127" cy="150" rx="19" ry="23" fill="#d8a888"/>
<path d="M106 140 Q127 120 148 140 L146 146 L108 146Z" fill="#2a1e18"/>
<path d="M88 195 Q125 170 162 195 L160 320 L108 320Z" fill="#22242c"/>
<path d="M108 320 L132 320 L138 470 L120 475Z" fill="#1c1e26"/>
<path d="M136 320 L160 320 L150 440 L140 440Z" fill="#1c1e26"/>
<!-- tall boy grey suit -->
<ellipse cx="210" cy="115" rx="21" ry="27" fill="#d9a686"/>
<path d="M186 102 Q210 74 236 100 L234 108 L188 112Z" fill="#2e2018"/>
<path d="M118 235 Q150 165 212 152 Q258 160 264 205 L258 335 L178 335 L130 300Z" fill="#4c4e58"/>
<path d="M178 330 L220 330 L222 560 L194 560Z" fill="#464850"/>
<path d="M222 330 L258 330 L246 450 L232 450Z" fill="#464850"/>
<path d="M202 156 L220 156 L214 230 L206 230Z" fill="#e8e4e8"/>
<path d="M207 165 L213 165 L214 215 L208 222Z" fill="#6a2a40"/>
<ellipse cx="207" cy="560" rx="16" ry="11" fill="#111"/>
<!-- pale girl behind -->
<ellipse cx="345" cy="175" rx="20" ry="24" fill="#e8c4a8"/>
<path d="M345 380 L368 380 L372 510 L352 510Z" fill="#d9a080"/>
<ellipse cx="362" cy="512" rx="14" ry="12" fill="#c04030"/>
<!-- main boy grey suit -->
<ellipse cx="298" cy="138" rx="25" ry="31" fill="#dba888"/>
<path d="M266 120 Q296 86 328 116 L326 126 L270 132Z" fill="#2a1a14"/>
<path d="M222 222 Q252 182 300 180 Q350 186 376 232 L396 320 L345 390 L330 420 L240 420 L226 350Z" fill="#5a5c66"/>
<path d="M242 415 L288 415 L290 610 L252 610Z" fill="#54565e"/>
<path d="M290 415 L334 415 L320 610 L292 610Z" fill="#5a5c64"/>
<path d="M282 186 L300 180 L318 190 L312 290 L290 290Z" fill="#eceaea"/>
<path d="M294 202 L304 202 L308 282 L298 294 L290 282Z" fill="#b82030"/>
<!-- girl blue dress -->
<path d="M430 185 Q468 130 508 175 L515 300 L425 300Z" fill="#141018"/>
<ellipse cx="472" cy="195" rx="21" ry="28" fill="#e6b898"/>
<path d="M420 252 Q465 228 515 252 L520 330 L530 425 L385 425 L405 330Z" fill="#1e3a8a"/>
<path d="M408 425 L440 425 L430 560 L408 560Z" fill="#e0a888"/>
<path d="M468 425 L502 425 L500 590 L478 590Z" fill="#e2aa8a"/>
<ellipse cx="420" cy="560" rx="15" ry="20" fill="#111"/>
<ellipse cx="496" cy="598" rx="14" ry="12" fill="#111"/>
<path d="M400 240 L415 240 L420 380 L405 380Z" fill="#c8d8b0"/>
<!-- man dark suit behind right -->
<ellipse cx="590" cy="165" rx="20" ry="24" fill="#d9a888"/>
<path d="M530 212 Q580 188 625 212 L620 325 L540 325 L535 300Z" fill="#1c1c22"/>
<path d="M540 325 L575 325 L560 450 L542 450Z" fill="#18181e"/>
<path d="M580 325 L615 325 L625 460 L600 460Z" fill="#18181e"/>
<!-- girl black dress -->
<path d="M638 168 Q670 138 698 172 L702 260 L632 260Z" fill="#1a1010"/>
<ellipse cx="668" cy="192" rx="21" ry="27" fill="#e4b494"/>
<path d="M612 242 Q660 222 700 246 L696 420 L600 420Z" fill="#141416"/>
<path d="M600 420 L640 420 L612 548 L590 545Z" fill="#e0a888"/>
<path d="M652 420 L694 420 L722 590 L696 596Z" fill="#e2aa8a"/>
<ellipse cx="595" cy="545" rx="14" ry="12" fill="#c02028"/>
<ellipse cx="712" cy="595" rx="20" ry="12" fill="#c02028"/>
<path d="M698 260 L760 236 L766 258 L700 292Z" fill="#e0b090"/>
<!-- tall boy tux right -->
<ellipse cx="762" cy="132" rx="21" ry="29" fill="#dcae8e"/>
<path d="M736 120 Q762 90 790 116 L788 122 L740 128Z" fill="#b89060"/>
<path d="M690 200 Q750 166 805 190 L805 380 L715 380Z" fill="#141418"/>
<path d="M715 375 L755 375 L752 550 L730 550Z" fill="#121216"/>
<path d="M758 375 L800 375 L790 540 L765 540Z" fill="#121216"/>
<path d="M752 172 L774 172 L770 252 L756 252Z" fill="#f0f0f0"/>
<ellipse cx="752" cy="552" rx="25" ry="12" fill="#0a0a0a"/>
</g>
</svg>
<svg x="354" y="211" width="107" height="98" viewBox="25 35 675 615" preserveAspectRatio="none" overflow="hidden">
<defs><linearGradient id="p2bg" x1="0" y1="0" x2="0" y2="1"><stop offset="0" stop-color="#b08848"/><stop offset="0.4" stop-color="#8a6238"/><stop offset="1" stop-color="#4a3420"/></linearGradient></defs>
<rect x="25" y="35" width="675" height="615" fill="url(#p2bg)"/>
<rect x="25" y="35" width="675" height="30" fill="#c8a860"/>
<ellipse cx="510" cy="110" rx="50" ry="30" fill="#f0dca0"/>
<rect x="440" y="200" width="80" height="120" fill="#c0a070" opacity="0.6"/>
<!-- left woman -->
<ellipse cx="95" cy="130" rx="48" ry="40" fill="#2a1818"/>
<ellipse cx="97" cy="160" rx="36" ry="50" fill="#c88a6a"/>
<path d="M25 250 Q100 230 195 260 L185 330 L120 400 L25 380Z" fill="#c41c1c"/>
<rect x="25" y="330" width="90" height="320" fill="#17302e"/>
<!-- grey hair woman -->
<ellipse cx="215" cy="185" rx="52" ry="60" fill="#c8c0b4"/>
<ellipse cx="245" cy="230" rx="30" ry="50" fill="#dcb090"/>
<path d="M90 330 Q140 300 200 320 L210 600 L150 600 L90 500Z" fill="#4a4238"/>
<path d="M110 360 L190 330 L200 560 L160 580Z" fill="#7a6c52" opacity="0.6"/>
<!-- blonde behind right -->
<ellipse cx="420" cy="215" rx="50" ry="60" fill="#c8a870"/>
<ellipse cx="420" cy="240" rx="32" ry="45" fill="#d8a888"/>
<!-- main blonde -->
<ellipse cx="310" cy="150" rx="75" ry="65" fill="#d0bc90"/>
<ellipse cx="325" cy="225" rx="48" ry="70" fill="#e4b494"/>
<path d="M265 290 L380 290 L370 340 L280 340Z" fill="#e2b090"/>
<path d="M170 340 Q210 300 290 320 Q360 330 420 310 L450 500 L440 650 L170 650 L200 520Z" fill="#1a4856"/>
<path d="M175 360 Q165 460 205 560 Q260 590 330 520 Q380 440 390 360 L355 330 Q330 440 280 520 Q240 500 250 350 Q220 320 175 360Z" fill="#e8b898"/>
<path d="M345 240 L385 250 L430 390 L410 400 L370 300Z" fill="#1a1a1a"/>
<ellipse cx="360" cy="265" rx="20" ry="18" fill="#2a2a2a"/>
<!-- man right -->
<ellipse cx="610" cy="125" rx="65" ry="35" fill="#3a2418"/>
<ellipse cx="610" cy="190" rx="58" ry="78" fill="#d49c7c"/>
<rect x="565" y="178" width="40" height="14" rx="5" fill="none" stroke="#2a1a1a" stroke-width="5"/><rect x="615" y="178" width="40" height="14" rx="5" fill="none" stroke="#2a1a1a" stroke-width="5"/>
<path d="M455 300 Q540 250 610 260 Q680 250 700 280 L700 650 L455 650Z" fill="#1e2a40"/>
<path d="M570 255 L655 255 L645 400 L590 400Z" fill="#e6e2e6"/>
<path d="M612 290 L640 290 L652 420 L630 430 L612 400Z" fill="#6a2848"/>
</svg>
<svg x="342" y="309" width="119" height="83" viewBox="30 28 890 622" preserveAspectRatio="none" overflow="hidden">
<defs><linearGradient id="p3bg" x1="0" y1="0" x2="0" y2="1"><stop offset="0" stop-color="#b8984a"/><stop offset="0.15" stop-color="#9a7838"/><stop offset="0.7" stop-color="#6a4c28"/><stop offset="0.75" stop-color="#d8ccb0"/><stop offset="1" stop-color="#e8e2d2"/></linearGradient></defs>
<rect x="30" y="28" width="890" height="622" fill="url(#p3bg)"/>
<rect x="30" y="28" width="890" height="60" fill="#c4a450"/>
<ellipse cx="530" cy="45" rx="60" ry="18" fill="#f0e0a0"/>
<rect x="310" y="30" width="60" height="400" fill="#e6dcc4"/>
<rect x="720" y="30" width="55" height="400" fill="#eae2cc"/>
<rect x="160" y="90" width="40" height="300" fill="#d8c8a0"/>
<rect x="640" y="90" width="45" height="300" fill="#d8c8a0"/>
<rect x="830" y="90" width="45" height="300" fill="#d0c098"/>
<rect x="390" y="100" width="240" height="200" fill="#a88848"/>
<rect x="30" y="430" width="890" height="60" fill="#8a6a38"/>
<rect x="30" y="490" width="890" height="160" fill="#e2dac4"/>
<ellipse cx="65" cy="214.0" rx="23.0" ry="30.0" fill="#c09060"/>
<ellipse cx="65" cy="220.0" rx="15.0" ry="21.0" fill="#e0b090"/>
<path d="M29.0 255.0 L25.0 400.0 L35.0 405.0 L41.0 260.0Z" fill="#dca888"/>
<path d="M101.0 255.0 L105.0 400.0 L95.0 405.0 L89.0 260.0Z" fill="#dca888"/>
<path d="M37 250.0 Q65 240.0 93 250.0 L89.0 330.0 L99.0 430.0 L31.0 430.0 L41.0 330.0Z" fill="#151515"/>
<path d="M39.0 430.0 L63.0 430.0 L57.0 590.0 L41.0 590.0Z" fill="#d9a088"/>
<path d="M67.0 430.0 L91.0 430.0 L87.0 580.0 L73.0 580.0Z" fill="#d9a088"/>
<ellipse cx="47.0" cy="592.0" rx="16.0" ry="9.0" fill="#e07070"/>
<ellipse cx="83.0" cy="582.0" rx="16.0" ry="9.0" fill="#e07070"/>
<ellipse cx="155" cy="214.0" rx="23.0" ry="30.0" fill="#2a1a14"/>
<ellipse cx="155" cy="220.0" rx="15.0" ry="21.0" fill="#e0b090"/>
<path d="M119.0 255.0 L115.0 400.0 L125.0 405.0 L131.0 260.0Z" fill="#dca888"/>
<path d="M191.0 255.0 L195.0 400.0 L185.0 405.0 L179.0 260.0Z" fill="#dca888"/>
<path d="M127 250.0 Q155 240.0 183 250.0 L179.0 330.0 L189.0 430.0 L121.0 430.0 L131.0 330.0Z" fill="#151515"/>
<path d="M129.0 430.0 L153.0 430.0 L147.0 590.0 L131.0 590.0Z" fill="#d9a088"/>
<path d="M157.0 430.0 L181.0 430.0 L177.0 580.0 L163.0 580.0Z" fill="#d9a088"/>
<ellipse cx="137.0" cy="592.0" rx="16.0" ry="9.0" fill="#c03030"/>
<ellipse cx="173.0" cy="582.0" rx="16.0" ry="9.0" fill="#c03030"/>
<ellipse cx="250" cy="214.0" rx="23.0" ry="30.0" fill="#6a4020"/>
<ellipse cx="250" cy="220.0" rx="15.0" ry="21.0" fill="#e0b090"/>
<path d="M214.0 255.0 L210.0 400.0 L220.0 405.0 L226.0 260.0Z" fill="#dca888"/>
<path d="M286.0 255.0 L290.0 400.0 L280.0 405.0 L274.0 260.0Z" fill="#dca888"/>
<path d="M222 250.0 Q250 240.0 278 250.0 L274.0 330.0 L284.0 430.0 L216.0 430.0 L226.0 330.0Z" fill="#ece8e4"/>
<path d="M224.0 430.0 L248.0 430.0 L242.0 590.0 L226.0 590.0Z" fill="#e0a890"/>
<path d="M252.0 430.0 L276.0 430.0 L272.0 580.0 L258.0 580.0Z" fill="#e0a890"/>
<ellipse cx="232.0" cy="592.0" rx="16.0" ry="9.0" fill="#e08080"/>
<ellipse cx="268.0" cy="582.0" rx="16.0" ry="9.0" fill="#e08080"/>
<ellipse cx="330" cy="214.0" rx="23.0" ry="30.0" fill="#d8c080"/>
<ellipse cx="330" cy="220.0" rx="15.0" ry="21.0" fill="#e0b090"/>
<path d="M294.0 255.0 L290.0 400.0 L300.0 405.0 L306.0 260.0Z" fill="#dca888"/>
<path d="M366.0 255.0 L370.0 400.0 L360.0 405.0 L354.0 260.0Z" fill="#dca888"/>
<path d="M302 250.0 Q330 240.0 358 250.0 L354.0 330.0 L364.0 430.0 L296.0 430.0 L306.0 330.0Z" fill="#151515"/>
<path d="M304.0 430.0 L328.0 430.0 L322.0 590.0 L306.0 590.0Z" fill="#d9a088"/>
<path d="M332.0 430.0 L356.0 430.0 L352.0 580.0 L338.0 580.0Z" fill="#d9a088"/>
<ellipse cx="312.0" cy="592.0" rx="16.0" ry="9.0" fill="#e0a0a0"/>
<ellipse cx="348.0" cy="582.0" rx="16.0" ry="9.0" fill="#e0a0a0"/>
<ellipse cx="420" cy="214.0" rx="23.0" ry="30.0" fill="#3a2418"/>
<ellipse cx="420" cy="220.0" rx="15.0" ry="21.0" fill="#e0b090"/>
<path d="M386.0 255.0 L382.0 400.0 L392.0 405.0 L398.0 260.0Z" fill="#dca888"/>
<path d="M454.0 255.0 L458.0 400.0 L448.0 405.0 L442.0 260.0Z" fill="#dca888"/>
<path d="M394 250.0 Q420 240.0 446 250.0 L442.0 330.0 L452.0 430.0 L388.0 430.0 L398.0 330.0Z" fill="#101010"/>
<path d="M396.0 430.0 L418.0 430.0 L412.0 590.0 L398.0 590.0Z" fill="#3a3038"/>
<path d="M422.0 430.0 L444.0 430.0 L440.0 580.0 L428.0 580.0Z" fill="#3a3038"/>
<ellipse cx="404.0" cy="592.0" rx="16.0" ry="9.0" fill="#1a1a1a"/>
<ellipse cx="436.0" cy="582.0" rx="16.0" ry="9.0" fill="#1a1a1a"/>
<ellipse cx="505" cy="214.0" rx="23.0" ry="30.0" fill="#c8a070"/>
<ellipse cx="505" cy="220.0" rx="15.0" ry="21.0" fill="#e0b090"/>
<path d="M469.0 255.0 L465.0 400.0 L475.0 405.0 L481.0 260.0Z" fill="#dca888"/>
<path d="M541.0 255.0 L545.0 400.0 L535.0 405.0 L529.0 260.0Z" fill="#dca888"/>
<path d="M477 250.0 Q505 240.0 533 250.0 L529.0 330.0 L539.0 430.0 L471.0 430.0 L481.0 330.0Z" fill="#151515"/>
<path d="M479.0 430.0 L503.0 430.0 L497.0 590.0 L481.0 590.0Z" fill="#d9a088"/>
<path d="M507.0 430.0 L531.0 430.0 L527.0 580.0 L513.0 580.0Z" fill="#d9a088"/>
<ellipse cx="487.0" cy="592.0" rx="16.0" ry="9.0" fill="#1a1a1a"/>
<ellipse cx="523.0" cy="582.0" rx="16.0" ry="9.0" fill="#1a1a1a"/>
<ellipse cx="590" cy="214.0" rx="23.0" ry="30.0" fill="#c8a060"/>
<ellipse cx="590" cy="220.0" rx="15.0" ry="21.0" fill="#e0b090"/>
<path d="M556.0 255.0 L552.0 400.0 L562.0 405.0 L568.0 260.0Z" fill="#dca888"/>
<path d="M624.0 255.0 L628.0 400.0 L618.0 405.0 L612.0 260.0Z" fill="#dca888"/>
<path d="M564 250.0 Q590 240.0 616 250.0 L612.0 330.0 L622.0 430.0 L558.0 430.0 L568.0 330.0Z" fill="#141414"/>
<path d="M566.0 430.0 L588.0 430.0 L582.0 590.0 L568.0 590.0Z" fill="#302838"/>
<path d="M592.0 430.0 L614.0 430.0 L610.0 580.0 L598.0 580.0Z" fill="#302838"/>
<ellipse cx="574.0" cy="592.0" rx="16.0" ry="9.0" fill="#1a1a1a"/>
<ellipse cx="606.0" cy="582.0" rx="16.0" ry="9.0" fill="#1a1a1a"/>
<ellipse cx="670" cy="214.0" rx="23.0" ry="30.0" fill="#e0c890"/>
<ellipse cx="670" cy="220.0" rx="15.0" ry="21.0" fill="#e0b090"/>
<path d="M634.0 255.0 L630.0 400.0 L640.0 405.0 L646.0 260.0Z" fill="#dca888"/>
<path d="M706.0 255.0 L710.0 400.0 L700.0 405.0 L694.0 260.0Z" fill="#dca888"/>
<path d="M642 250.0 Q670 240.0 698 250.0 L694.0 330.0 L704.0 430.0 L636.0 430.0 L646.0 330.0Z" fill="#151515"/>
<path d="M644.0 430.0 L668.0 430.0 L662.0 590.0 L646.0 590.0Z" fill="#d9a088"/>
<path d="M672.0 430.0 L696.0 430.0 L692.0 580.0 L678.0 580.0Z" fill="#d9a088"/>
<ellipse cx="652.0" cy="592.0" rx="16.0" ry="9.0" fill="#1a1a1a"/>
<ellipse cx="688.0" cy="582.0" rx="16.0" ry="9.0" fill="#1a1a1a"/>
<ellipse cx="760" cy="214.0" rx="23.0" ry="30.0" fill="#8a3a20"/>
<ellipse cx="760" cy="220.0" rx="15.0" ry="21.0" fill="#e0b090"/>
<path d="M716.0 255.0 L712.0 400.0 L722.0 405.0 L728.0 260.0Z" fill="#dca888"/>
<path d="M804.0 255.0 L808.0 400.0 L798.0 405.0 L792.0 260.0Z" fill="#dca888"/>
<path d="M724 250.0 Q760 240.0 796 250.0 L792.0 330.0 L802.0 430.0 L718.0 430.0 L728.0 330.0Z" fill="#2030b0"/>
<path d="M726.0 430.0 L758.0 430.0 L752.0 590.0 L728.0 590.0Z" fill="#e0a890"/>
<path d="M762.0 430.0 L794.0 430.0 L790.0 580.0 L768.0 580.0Z" fill="#e0a890"/>
<ellipse cx="734.0" cy="592.0" rx="16.0" ry="9.0" fill="#1a1a1a"/>
<ellipse cx="786.0" cy="582.0" rx="16.0" ry="9.0" fill="#1a1a1a"/>
<ellipse cx="870" cy="214.0" rx="23.0" ry="30.0" fill="#b08060"/>
<ellipse cx="870" cy="220.0" rx="15.0" ry="21.0" fill="#e0b090"/>
<path d="M832.0 255.0 L828.0 400.0 L838.0 405.0 L844.0 260.0Z" fill="#dca888"/>
<path d="M908.0 255.0 L912.0 400.0 L902.0 405.0 L896.0 260.0Z" fill="#dca888"/>
<path d="M840 250.0 Q870 240.0 900 250.0 L896.0 330.0 L906.0 430.0 L834.0 430.0 L844.0 330.0Z" fill="#e8e4e4"/>
<path d="M842.0 430.0 L868.0 430.0 L862.0 590.0 L844.0 590.0Z" fill="#d9a088"/>
<path d="M872.0 430.0 L898.0 430.0 L894.0 580.0 L878.0 580.0Z" fill="#d9a088"/>
<ellipse cx="850.0" cy="592.0" rx="16.0" ry="9.0" fill="#d07070"/>
<ellipse cx="890.0" cy="582.0" rx="16.0" ry="9.0" fill="#d07070"/></svg>
<svg x="342" y="392" width="119" height="83" viewBox="25 45 845 595" preserveAspectRatio="none" overflow="hidden">
<defs><linearGradient id="p4bg" x1="0" y1="0" x2="0" y2="1"><stop offset="0" stop-color="#e8e2d4"/><stop offset="0.18" stop-color="#e0d4b8"/><stop offset="0.3" stop-color="#c8a860"/><stop offset="0.4" stop-color="#7a6040"/><stop offset="0.75" stop-color="#3e3228"/><stop offset="0.82" stop-color="#d8d0c0"/><stop offset="1" stop-color="#e4e0d4"/></linearGradient></defs>
<rect x="25" y="45" width="845" height="595" fill="url(#p4bg)"/>
<rect x="210" y="60" width="550" height="80" fill="#f2eee4"/>
<path d="M25 90 L140 150 L760 150 L870 90 L870 130 L760 190 L140 190 L25 130Z" fill="#c8a868"/>
<rect x="90" y="160" width="48" height="320" fill="#ece6da"/>
<rect x="200" y="210" width="40" height="270" fill="#e0d8c8"/>
<rect x="310" y="160" width="50" height="320" fill="#ece6da"/>
<rect x="580" y="160" width="45" height="320" fill="#ece6da"/>
<rect x="780" y="160" width="50" height="320" fill="#ece6da"/>
<rect x="380" y="220" width="150" height="60" fill="#a88a50"/>
<ellipse cx="460" cy="190" rx="40" ry="15" fill="#fff0c0"/>
<ellipse cx="55" cy="302.48" rx="14.26" ry="18.6" fill="#6a4a30"/>
<ellipse cx="55" cy="306.2" rx="9.3" ry="13.02" fill="#e0b090"/>
<path d="M24.04 327.9 L21.560000000000002 417.8 L27.76 420.9 L31.48 331.0Z" fill="#dca888"/>
<path d="M85.96 327.9 L88.44 417.8 L82.24 420.9 L78.52 331.0Z" fill="#dca888"/>
<path d="M29 324.8 Q55 318.6 81 324.8 L78.52 374.4 L84.72 436.4 L25.28 436.4 L31.48 374.4Z" fill="#e0e0e8"/>
<path d="M30.24 436.4 L53.76 436.4 L50.04 535.6 L31.48 535.6Z" fill="#d9a088"/>
<path d="M56.24 436.4 L79.76 436.4 L77.28 529.4 L59.96 529.4Z" fill="#d9a088"/>
<ellipse cx="35.2" cy="536.84" rx="9.92" ry="5.58" fill="#3a2a2a"/>
<ellipse cx="74.8" cy="530.64" rx="9.92" ry="5.58" fill="#3a2a2a"/>
<ellipse cx="120" cy="302.48" rx="14.26" ry="18.6" fill="#3a2a1a"/>
<ellipse cx="120" cy="306.2" rx="9.3" ry="13.02" fill="#e0b090"/>
<path d="M93.04 327.9 L90.56 417.8 L96.76 420.9 L100.48 331.0Z" fill="#dca888"/>
<path d="M146.96 327.9 L149.44 417.8 L143.24 420.9 L139.52 331.0Z" fill="#dca888"/>
<path d="M98 324.8 Q120 318.6 142 324.8 L139.52 374.4 L145.72 436.4 L94.28 436.4 L100.48 374.4Z" fill="#1a3a2a"/>
<path d="M99.24 436.4 L118.76 436.4 L115.04 535.6 L100.48 535.6Z" fill="#c89078"/>
<path d="M121.24 436.4 L140.76 436.4 L138.28 529.4 L124.96 529.4Z" fill="#c89078"/>
<ellipse cx="104.2" cy="536.84" rx="9.92" ry="5.58" fill="#8a3a2a"/>
<ellipse cx="135.8" cy="530.64" rx="9.92" ry="5.58" fill="#8a3a2a"/>
<ellipse cx="180" cy="302.48" rx="14.26" ry="18.6" fill="#c8a070"/>
<ellipse cx="180" cy="306.2" rx="9.3" ry="13.02" fill="#e0b090"/>
<path d="M151.04 327.9 L148.56 417.8 L154.76 420.9 L158.48 331.0Z" fill="#dca888"/>
<path d="M208.96 327.9 L211.44 417.8 L205.24 420.9 L201.52 331.0Z" fill="#dca888"/>
<path d="M156 324.8 Q180 318.6 204 324.8 L201.52 374.4 L207.72 436.4 L152.28 436.4 L158.48 374.4Z" fill="#2030a0"/>
<path d="M157.24 436.4 L178.76 436.4 L175.04 535.6 L158.48 535.6Z" fill="#d9a088"/>
<path d="M181.24 436.4 L202.76 436.4 L200.28 529.4 L184.96 529.4Z" fill="#d9a088"/>
<ellipse cx="162.2" cy="536.84" rx="9.92" ry="5.58" fill="#1a1a1a"/>
<ellipse cx="197.8" cy="530.64" rx="9.92" ry="5.58" fill="#1a1a1a"/>
<ellipse cx="245" cy="302.48" rx="14.26" ry="18.6" fill="#2a1a14"/>
<ellipse cx="245" cy="306.2" rx="9.3" ry="13.02" fill="#e0b090"/>
<path d="M218.04 327.9 L215.56 417.8 L221.76 420.9 L225.48 331.0Z" fill="#dca888"/>
<path d="M271.96 327.9 L274.44 417.8 L268.24 420.9 L264.52 331.0Z" fill="#dca888"/>
<path d="M223 324.8 Q245 318.6 267 324.8 L264.52 374.4 L270.72 436.4 L219.28 436.4 L225.48 374.4Z" fill="#151515"/>
<path d="M224.24 436.4 L243.76 436.4 L240.04 535.6 L225.48 535.6Z" fill="#d9a088"/>
<path d="M246.24 436.4 L265.76 436.4 L263.28 529.4 L249.96 529.4Z" fill="#d9a088"/>
<ellipse cx="229.2" cy="536.84" rx="9.92" ry="5.58" fill="#1a1a1a"/>
<ellipse cx="260.8" cy="530.64" rx="9.92" ry="5.58" fill="#1a1a1a"/>
<ellipse cx="290" cy="302.48" rx="14.26" ry="18.6" fill="#3a2a1a"/>
<ellipse cx="290" cy="306.2" rx="9.3" ry="13.02" fill="#e0b090"/>
<path d="M265.04 327.9 L262.56 417.8 L268.76 420.9 L272.48 331.0Z" fill="#dca888"/>
<path d="M314.96 327.9 L317.44 417.8 L311.24 420.9 L307.52 331.0Z" fill="#dca888"/>
<path d="M270 324.8 Q290 318.6 310 324.8 L307.52 374.4 L313.72 436.4 L266.28 436.4 L272.48 374.4Z" fill="#1a1a1a"/>
<path d="M271.24 436.4 L288.76 436.4 L285.04 535.6 L272.48 535.6Z" fill="#302828"/>
<path d="M291.24 436.4 L308.76 436.4 L306.28 529.4 L294.96 529.4Z" fill="#302828"/>
<ellipse cx="276.2" cy="536.84" rx="9.92" ry="5.58" fill="#1a1a1a"/>
<ellipse cx="303.8" cy="530.64" rx="9.92" ry="5.58" fill="#1a1a1a"/>
<ellipse cx="340" cy="302.48" rx="14.26" ry="18.6" fill="#5a3a20"/>
<ellipse cx="340" cy="306.2" rx="9.3" ry="13.02" fill="#e0b090"/>
<path d="M313.04 327.9 L310.56 417.8 L316.76 420.9 L320.48 331.0Z" fill="#dca888"/>
<path d="M366.96 327.9 L369.44 417.8 L363.24 420.9 L359.52 331.0Z" fill="#dca888"/>
<path d="M318 324.8 Q340 318.6 362 324.8 L359.52 374.4 L365.72 436.4 L314.28 436.4 L320.48 374.4Z" fill="#151515"/>
<path d="M319.24 436.4 L338.76 436.4 L335.04 535.6 L320.48 535.6Z" fill="#d9a088"/>
<path d="M341.24 436.4 L360.76 436.4 L358.28 529.4 L344.96 529.4Z" fill="#d9a088"/>
<ellipse cx="324.2" cy="536.84" rx="9.92" ry="5.58" fill="#1a1a1a"/>
<ellipse cx="355.8" cy="530.64" rx="9.92" ry="5.58" fill="#1a1a1a"/>
<ellipse cx="410" cy="302.48" rx="14.26" ry="18.6" fill="#3a2418"/>
<ellipse cx="410" cy="306.2" rx="9.3" ry="13.02" fill="#e0b090"/>
<path d="M383.04 327.9 L380.56 417.8 L386.76 420.9 L390.48 331.0Z" fill="#dca888"/>
<path d="M436.96 327.9 L439.44 417.8 L433.24 420.9 L429.52 331.0Z" fill="#dca888"/>
<path d="M388 324.8 Q410 318.6 432 324.8 L429.52 374.4 L435.72 436.4 L384.28 436.4 L390.48 374.4Z" fill="#141414"/>
<path d="M389.24 436.4 L408.76 436.4 L405.04 535.6 L390.48 535.6Z" fill="#d9a088"/>
<path d="M411.24 436.4 L430.76 436.4 L428.28 529.4 L414.96 529.4Z" fill="#d9a088"/>
<ellipse cx="394.2" cy="536.84" rx="9.92" ry="5.58" fill="#1a1a1a"/>
<ellipse cx="425.8" cy="530.64" rx="9.92" ry="5.58" fill="#1a1a1a"/>
<ellipse cx="465" cy="302.48" rx="14.26" ry="18.6" fill="#c8a070"/>
<ellipse cx="465" cy="306.2" rx="9.3" ry="13.02" fill="#e0b090"/>
<path d="M438.04 327.9 L435.56 417.8 L441.76 420.9 L445.48 331.0Z" fill="#dca888"/>
<path d="M491.96 327.9 L494.44 417.8 L488.24 420.9 L484.52 331.0Z" fill="#dca888"/>
<path d="M443 324.8 Q465 318.6 487 324.8 L484.52 374.4 L490.72 436.4 L439.28 436.4 L445.48 374.4Z" fill="#a8a098"/>
<path d="M444.24 436.4 L463.76 436.4 L460.04 535.6 L445.48 535.6Z" fill="#d9a088"/>
<path d="M466.24 436.4 L485.76 436.4 L483.28 529.4 L469.96 529.4Z" fill="#d9a088"/>
<ellipse cx="449.2" cy="536.84" rx="9.92" ry="5.58" fill="#3a3a3a"/>
<ellipse cx="480.8" cy="530.64" rx="9.92" ry="5.58" fill="#3a3a3a"/>
<ellipse cx="520" cy="302.48" rx="14.26" ry="18.6" fill="#d8c090"/>
<ellipse cx="520" cy="306.2" rx="9.3" ry="13.02" fill="#e0b090"/>
<path d="M493.04 327.9 L490.56 417.8 L496.76 420.9 L500.48 331.0Z" fill="#dca888"/>
<path d="M546.96 327.9 L549.44 417.8 L543.24 420.9 L539.52 331.0Z" fill="#dca888"/>
<path d="M498 324.8 Q520 318.6 542 324.8 L539.52 374.4 L545.72 436.4 L494.28 436.4 L500.48 374.4Z" fill="#e08890"/>
<path d="M499.24 436.4 L518.76 436.4 L515.04 535.6 L500.48 535.6Z" fill="#d9a088"/>
<path d="M521.24 436.4 L540.76 436.4 L538.28 529.4 L524.96 529.4Z" fill="#d9a088"/>
<ellipse cx="504.2" cy="536.84" rx="9.92" ry="5.58" fill="#6a4a4a"/>
<ellipse cx="535.8" cy="530.64" rx="9.92" ry="5.58" fill="#6a4a4a"/>
<ellipse cx="575" cy="302.48" rx="14.26" ry="18.6" fill="#8a6040"/>
<ellipse cx="575" cy="306.2" rx="9.3" ry="13.02" fill="#e0b090"/>
<path d="M548.04 327.9 L545.56 417.8 L551.76 420.9 L555.48 331.0Z" fill="#dca888"/>
<path d="M601.96 327.9 L604.44 417.8 L598.24 420.9 L594.52 331.0Z" fill="#dca888"/>
<path d="M553 324.8 Q575 318.6 597 324.8 L594.52 374.4 L600.72 436.4 L549.28 436.4 L555.48 374.4Z" fill="#6a3a8a"/>
<path d="M554.24 436.4 L573.76 436.4 L570.04 535.6 L555.48 535.6Z" fill="#d9a088"/>
<path d="M576.24 436.4 L595.76 436.4 L593.28 529.4 L579.96 529.4Z" fill="#d9a088"/>
<ellipse cx="559.2" cy="536.84" rx="9.92" ry="5.58" fill="#3a3a3a"/>
<ellipse cx="590.8" cy="530.64" rx="9.92" ry="5.58" fill="#3a3a3a"/>
<ellipse cx="635" cy="302.48" rx="14.26" ry="18.6" fill="#3a2a1a"/>
<ellipse cx="635" cy="306.2" rx="9.3" ry="13.02" fill="#e0b090"/>
<path d="M608.04 327.9 L605.56 417.8 L611.76 420.9 L615.48 331.0Z" fill="#dca888"/>
<path d="M661.96 327.9 L664.44 417.8 L658.24 420.9 L654.52 331.0Z" fill="#dca888"/>
<path d="M613 324.8 Q635 318.6 657 324.8 L654.52 374.4 L660.72 436.4 L609.28 436.4 L615.48 374.4Z" fill="#151515"/>
<path d="M614.24 436.4 L633.76 436.4 L630.04 535.6 L615.48 535.6Z" fill="#d9a088"/>
<path d="M636.24 436.4 L655.76 436.4 L653.28 529.4 L639.96 529.4Z" fill="#d9a088"/>
<ellipse cx="619.2" cy="536.84" rx="9.92" ry="5.58" fill="#1a1a1a"/>
<ellipse cx="650.8" cy="530.64" rx="9.92" ry="5.58" fill="#1a1a1a"/>
<ellipse cx="690" cy="302.48" rx="14.26" ry="18.6" fill="#6a4a30"/>
<ellipse cx="690" cy="306.2" rx="9.3" ry="13.02" fill="#e0b090"/>
<path d="M663.04 327.9 L660.56 417.8 L666.76 420.9 L670.48 331.0Z" fill="#dca888"/>
<path d="M716.96 327.9 L719.44 417.8 L713.24 420.9 L709.52 331.0Z" fill="#dca888"/>
<path d="M668 324.8 Q690 318.6 712 324.8 L709.52 374.4 L715.72 436.4 L664.28 436.4 L670.48 374.4Z" fill="#8a8a90"/>
<path d="M669.24 436.4 L688.76 436.4 L685.04 535.6 L670.48 535.6Z" fill="#2a2a2a"/>
<path d="M691.24 436.4 L710.76 436.4 L708.28 529.4 L694.96 529.4Z" fill="#2a2a2a"/>
<ellipse cx="674.2" cy="536.84" rx="9.92" ry="5.58" fill="#1a1a1a"/>
<ellipse cx="705.8" cy="530.64" rx="9.92" ry="5.58" fill="#1a1a1a"/>
<ellipse cx="760" cy="302.48" rx="14.26" ry="18.6" fill="#6a3a20"/>
<ellipse cx="760" cy="306.2" rx="9.3" ry="13.02" fill="#e0b090"/>
<path d="M731.04 327.9 L728.56 417.8 L734.76 420.9 L738.48 331.0Z" fill="#dca888"/>
<path d="M788.96 327.9 L791.44 417.8 L785.24 420.9 L781.52 331.0Z" fill="#dca888"/>
<path d="M736 324.8 Q760 318.6 784 324.8 L781.52 374.4 L787.72 436.4 L732.28 436.4 L738.48 374.4Z" fill="#5a2a9a"/>
<path d="M737.24 436.4 L758.76 436.4 L755.04 535.6 L738.48 535.6Z" fill="#d9a088"/>
<path d="M761.24 436.4 L782.76 436.4 L780.28 529.4 L764.96 529.4Z" fill="#d9a088"/>
<ellipse cx="742.2" cy="536.84" rx="9.92" ry="5.58" fill="#1a1a1a"/>
<ellipse cx="777.8" cy="530.64" rx="9.92" ry="5.58" fill="#1a1a1a"/>
<ellipse cx="830" cy="302.48" rx="14.26" ry="18.6" fill="#c8a070"/>
<ellipse cx="830" cy="306.2" rx="9.3" ry="13.02" fill="#e0b090"/>
<path d="M793.04 327.9 L790.56 417.8 L796.76 420.9 L800.48 331.0Z" fill="#dca888"/>
<path d="M866.96 327.9 L869.44 417.8 L863.24 420.9 L859.52 331.0Z" fill="#dca888"/>
<path d="M798 324.8 Q830 318.6 862 324.8 L859.52 374.4 L865.72 436.4 L794.28 436.4 L800.48 374.4Z" fill="#2a5ad0"/>
<path d="M799.24 436.4 L828.76 436.4 L825.04 535.6 L800.48 535.6Z" fill="#2a4ad0"/>
<path d="M831.24 436.4 L860.76 436.4 L858.28 529.4 L834.96 529.4Z" fill="#2a4ad0"/>
<ellipse cx="804.2" cy="536.84" rx="9.92" ry="5.58" fill="#1a1a1a"/>
<ellipse cx="855.8" cy="530.64" rx="9.92" ry="5.58" fill="#1a1a1a"/></svg>
<svg x="631" y="351" width="118" height="82" viewBox="38 38 882 612" preserveAspectRatio="none" overflow="hidden">
<defs><linearGradient id="p5bg" x1="0" y1="0" x2="0" y2="1"><stop offset="0" stop-color="#f0ece4"/><stop offset="0.12" stop-color="#ebe6dc"/><stop offset="0.17" stop-color="#c8b078"/><stop offset="0.24" stop-color="#e0d0a8"/><stop offset="0.3" stop-color="#6a5a48"/><stop offset="0.7" stop-color="#4a3a30"/><stop offset="0.76" stop-color="#dcd8d0"/><stop offset="1" stop-color="#e2ded8"/></linearGradient></defs>
<rect x="38" y="38" width="882" height="612" fill="url(#p5bg)"/>
<path d="M38 38 L160 38 L300 150 L38 150Z" fill="#7a8090"/>
<path d="M38 38 L100 38 L160 90 L38 100Z" fill="#9aa0ac"/>
<rect x="135" y="150" width="45" height="230" fill="#f0ece4"/>
<rect x="225" y="150" width="35" height="230" fill="#ece6da"/>
<rect x="340" y="150" width="40" height="230" fill="#ece6da"/>
<rect x="440" y="150" width="40" height="230" fill="#ece6da"/>
<rect x="690" y="150" width="40" height="230" fill="#ece6da"/>
<rect x="860" y="150" width="45" height="230" fill="#e4ded2"/>
<rect x="500" y="190" width="140" height="60" fill="#a08048"/>
<ellipse cx="70" cy="270" rx="15.75" ry="19.95" fill="#4a3420"/>
<ellipse cx="70" cy="276.3" rx="12.600000000000001" ry="15.75" fill="#e6b898"/>
<path d="M48 299 Q70 289 92 299 L95 417 L45 417Z" fill="#5a2a30"/>
<rect x="56" y="417" width="9" height="89" fill="#d8a890"/>
<rect x="74" y="417" width="9" height="89" fill="#d8a890"/>
<rect x="54" y="501" width="32" height="10" fill="#2a2a2a"/>
<ellipse cx="118" cy="270" rx="15.75" ry="19.95" fill="#4a3420"/>
<ellipse cx="118" cy="276.3" rx="12.600000000000001" ry="15.75" fill="#e6b898"/>
<path d="M96 299 Q118 289 140 299 L143 417 L93 417Z" fill="#1a1a1a"/>
<rect x="105" y="417" width="9" height="89" fill="#d8a890"/>
<rect x="122" y="417" width="9" height="89" fill="#d8a890"/>
<rect x="102" y="501" width="32" height="10" fill="#2a2a2a"/>
<ellipse cx="166" cy="270" rx="15.75" ry="19.95" fill="#4a3420"/>
<ellipse cx="166" cy="276.3" rx="12.600000000000001" ry="15.75" fill="#e6b898"/>
<path d="M144 299 Q166 289 189 299 L192 417 L141 417Z" fill="#e8e4e0"/>
<rect x="153" y="417" width="9" height="89" fill="#d8a890"/>
<rect x="171" y="417" width="9" height="89" fill="#d8a890"/>
<rect x="151" y="501" width="32" height="10" fill="#2a2a2a"/>
<ellipse cx="215" cy="270" rx="15.75" ry="19.95" fill="#4a3420"/>
<ellipse cx="215" cy="276.3" rx="12.600000000000001" ry="15.75" fill="#e6b898"/>
<path d="M193 299 Q215 289 237 299 L240 417 L190 417Z" fill="#1a1a1a"/>
<rect x="201" y="417" width="9" height="89" fill="#d8a890"/>
<rect x="219" y="417" width="9" height="89" fill="#d8a890"/>
<rect x="199" y="501" width="32" height="10" fill="#2a2a2a"/>
<ellipse cx="263" cy="270" rx="15.75" ry="19.95" fill="#4a3420"/>
<ellipse cx="263" cy="276.3" rx="12.600000000000001" ry="15.75" fill="#e6b898"/>
<path d="M241 299 Q263 289 285 299 L288 417 L238 417Z" fill="#e8e4e0"/>
<rect x="249" y="417" width="9" height="89" fill="#d8a890"/>
<rect x="267" y="417" width="9" height="89" fill="#d8a890"/>
<rect x="247" y="501" width="32" height="10" fill="#2a2a2a"/>
<ellipse cx="311" cy="270" rx="15.75" ry="19.95" fill="#4a3420"/>
<ellipse cx="311" cy="276.3" rx="12.600000000000001" ry="15.75" fill="#e6b898"/>
<path d="M289 299 Q311 289 333 299 L336 417 L286 417Z" fill="#141414"/>
<rect x="298" y="417" width="9" height="89" fill="#d8a890"/>
<rect x="315" y="417" width="9" height="89" fill="#d8a890"/>
<rect x="295" y="501" width="32" height="10" fill="#2a2a2a"/>
<ellipse cx="359" cy="270" rx="15.75" ry="19.95" fill="#4a3420"/>
<ellipse cx="359" cy="276.3" rx="12.600000000000001" ry="15.75" fill="#e6b898"/>
<path d="M337 299 Q359 289 381 299 L385 417 L334 417Z" fill="#1a1a1a"/>
<rect x="346" y="417" width="9" height="89" fill="#d8a890"/>
<rect x="364" y="417" width="9" height="89" fill="#d8a890"/>
<rect x="344" y="501" width="32" height="10" fill="#2a2a2a"/>
<ellipse cx="408" cy="270" rx="15.75" ry="19.95" fill="#4a3420"/>
<ellipse cx="408" cy="276.3" rx="12.600000000000001" ry="15.75" fill="#e6b898"/>
<path d="M386 299 Q408 289 430 299 L433 417 L382 417Z" fill="#141414"/>
<rect x="394" y="417" width="9" height="89" fill="#d8a890"/>
<rect x="412" y="417" width="9" height="89" fill="#d8a890"/>
<rect x="392" y="501" width="32" height="10" fill="#2a2a2a"/>
<ellipse cx="456" cy="270" rx="15.75" ry="19.95" fill="#4a3420"/>
<ellipse cx="456" cy="276.3" rx="12.600000000000001" ry="15.75" fill="#e6b898"/>
<path d="M434 299 Q456 289 478 299 L481 417 L431 417Z" fill="#1a1a1a"/>
<rect x="442" y="417" width="9" height="89" fill="#d8a890"/>
<rect x="460" y="417" width="9" height="89" fill="#d8a890"/>
<rect x="440" y="501" width="32" height="10" fill="#2a2a2a"/>
<ellipse cx="504" cy="270" rx="15.75" ry="19.95" fill="#4a3420"/>
<ellipse cx="504" cy="276.3" rx="12.600000000000001" ry="15.75" fill="#e6b898"/>
<path d="M482 299 Q504 289 526 299 L529 417 L479 417Z" fill="#242424"/>
<rect x="490" y="417" width="9" height="89" fill="#d8a890"/>
<rect x="508" y="417" width="9" height="89" fill="#d8a890"/>
<rect x="488" y="501" width="32" height="10" fill="#2a2a2a"/>
<ellipse cx="552" cy="270" rx="15.75" ry="19.95" fill="#4a3420"/>
<ellipse cx="552" cy="276.3" rx="12.600000000000001" ry="15.75" fill="#e6b898"/>
<path d="M530 299 Q552 289 574 299 L578 417 L527 417Z" fill="#1a1a1a"/>
<rect x="539" y="417" width="9" height="89" fill="#d8a890"/>
<rect x="557" y="417" width="9" height="89" fill="#d8a890"/>
<rect x="537" y="501" width="32" height="10" fill="#2a2a2a"/>
<ellipse cx="601" cy="270" rx="15.75" ry="19.95" fill="#4a3420"/>
<ellipse cx="601" cy="276.3" rx="12.600000000000001" ry="15.75" fill="#e6b898"/>
<path d="M579 299 Q601 289 623 299 L626 417 L575 417Z" fill="#141414"/>
<rect x="587" y="417" width="9" height="89" fill="#d8a890"/>
<rect x="605" y="417" width="9" height="89" fill="#d8a890"/>
<rect x="585" y="501" width="32" height="10" fill="#2a2a2a"/>
<ellipse cx="649" cy="270" rx="15.75" ry="19.95" fill="#4a3420"/>
<ellipse cx="649" cy="276.3" rx="12.600000000000001" ry="15.75" fill="#e6b898"/>
<path d="M627 299 Q649 289 671 299 L674 417 L624 417Z" fill="#2040b0"/>
<rect x="635" y="417" width="9" height="89" fill="#d8a890"/>
<rect x="653" y="417" width="9" height="89" fill="#d8a890"/>
<rect x="633" y="501" width="32" height="10" fill="#2a2a2a"/>
<ellipse cx="697" cy="270" rx="15.75" ry="19.95" fill="#4a3420"/>
<ellipse cx="697" cy="276.3" rx="12.600000000000001" ry="15.75" fill="#e6b898"/>
<path d="M675 299 Q697 289 719 299 L722 417 L672 417Z" fill="#e8e8f0"/>
<rect x="683" y="417" width="9" height="89" fill="#d8a890"/>
<rect x="701" y="417" width="9" height="89" fill="#d8a890"/>
<rect x="681" y="501" width="32" height="10" fill="#2a2a2a"/>
<ellipse cx="745" cy="270" rx="15.75" ry="19.95" fill="#4a3420"/>
<ellipse cx="745" cy="276.3" rx="12.600000000000001" ry="15.75" fill="#e6b898"/>
<path d="M723 299 Q745 289 767 299 L770 417 L720 417Z" fill="#4a2a2a"/>
<rect x="732" y="417" width="9" height="89" fill="#d8a890"/>
<rect x="749" y="417" width="9" height="89" fill="#d8a890"/>
<rect x="730" y="501" width="32" height="10" fill="#2a2a2a"/>
<ellipse cx="794" cy="270" rx="15.75" ry="19.95" fill="#4a3420"/>
<ellipse cx="794" cy="276.3" rx="12.600000000000001" ry="15.75" fill="#e6b898"/>
<path d="M771 299 Q794 289 816 299 L819 417 L768 417Z" fill="#1a1a1a"/>
<rect x="780" y="417" width="9" height="89" fill="#d8a890"/>
<rect x="798" y="417" width="9" height="89" fill="#d8a890"/>
<rect x="778" y="501" width="32" height="10" fill="#2a2a2a"/>
<ellipse cx="842" cy="270" rx="15.75" ry="19.95" fill="#4a3420"/>
<ellipse cx="842" cy="276.3" rx="12.600000000000001" ry="15.75" fill="#e6b898"/>
<path d="M820 299 Q842 289 864 299 L867 417 L817 417Z" fill="#1a1a1a"/>
<rect x="828" y="417" width="9" height="89" fill="#d8a890"/>
<rect x="846" y="417" width="9" height="89" fill="#d8a890"/>
<rect x="826" y="501" width="32" height="10" fill="#2a2a2a"/>
<ellipse cx="890" cy="270" rx="15.75" ry="19.95" fill="#4a3420"/>
<ellipse cx="890" cy="276.3" rx="12.600000000000001" ry="15.75" fill="#e6b898"/>
<path d="M868 299 Q890 289 912 299 L915 417 L865 417Z" fill="#1a2a2a"/>
<rect x="876" y="417" width="9" height="89" fill="#d8a890"/>
<rect x="894" y="417" width="9" height="89" fill="#d8a890"/>
<rect x="874" y="501" width="32" height="10" fill="#2a2a2a"/>
</svg>
<svg x="631" y="433" width="118" height="81" viewBox="38 38 882 602" preserveAspectRatio="none" overflow="hidden">
<defs><linearGradient id="p6bg" x1="0" y1="0" x2="0" y2="1"><stop offset="0" stop-color="#e8e4dc"/><stop offset="0.08" stop-color="#f4f2ec"/><stop offset="0.22" stop-color="#ecead8"/><stop offset="0.28" stop-color="#c8aa70"/><stop offset="0.36" stop-color="#e8dcc0"/><stop offset="0.42" stop-color="#5a4a38"/><stop offset="0.75" stop-color="#3a3028"/><stop offset="0.8" stop-color="#dcd8d0"/><stop offset="1" stop-color="#e4e0d8"/></linearGradient></defs>
<rect x="38" y="38" width="882" height="602" fill="url(#p6bg)"/>
<path d="M38 80 L200 180 L760 180 L920 80 L920 100 L760 200 L200 200 L38 100Z" fill="#c8aa70"/>
<rect x="230" y="90" width="90" height="60" fill="#f8f6f0"/>
<rect x="640" y="90" width="90" height="60" fill="#f8f6f0"/>
<rect x="150" y="190" width="40" height="290" fill="#f0ece4"/>
<rect x="345" y="180" width="40" height="300" fill="#f0ece4"/>
<rect x="585" y="180" width="40" height="300" fill="#f0ece4"/>
<rect x="760" y="190" width="45" height="290" fill="#f0ece4"/>
<rect x="400" y="230" width="160" height="60" fill="#a08858"/>
<ellipse cx="65" cy="305" rx="14.25" ry="18.05" fill="#4a3420"/>
<ellipse cx="65" cy="310.7" rx="11.399999999999999" ry="14.25" fill="#e6b898"/>
<path d="M45 332 Q65 322 85 332 L88 438 L42 438Z" fill="#e0e0ea"/>
<rect x="53" y="438" width="9" height="81" fill="#d8a890"/>
<rect x="69" y="438" width="9" height="81" fill="#d8a890"/>
<rect x="51" y="514" width="28" height="10" fill="#2a2a2a"/>
<ellipse cx="111" cy="305" rx="14.25" ry="18.05" fill="#4a3420"/>
<ellipse cx="111" cy="310.7" rx="11.399999999999999" ry="14.25" fill="#e6b898"/>
<path d="M91 332 Q111 322 131 332 L134 438 L88 438Z" fill="#1a1a1a"/>
<rect x="99" y="438" width="9" height="81" fill="#d8a890"/>
<rect x="115" y="438" width="9" height="81" fill="#d8a890"/>
<rect x="97" y="514" width="28" height="10" fill="#2a2a2a"/>
<ellipse cx="157" cy="305" rx="14.25" ry="18.05" fill="#4a3420"/>
<ellipse cx="157" cy="310.7" rx="11.399999999999999" ry="14.25" fill="#e6b898"/>
<path d="M137 332 Q157 322 177 332 L180 438 L134 438Z" fill="#1a2a2a"/>
<rect x="145" y="438" width="9" height="81" fill="#d8a890"/>
<rect x="161" y="438" width="9" height="81" fill="#d8a890"/>
<rect x="143" y="514" width="28" height="10" fill="#2a2a2a"/>
<ellipse cx="203" cy="305" rx="14.25" ry="18.05" fill="#4a3420"/>
<ellipse cx="203" cy="310.7" rx="11.399999999999999" ry="14.25" fill="#e6b898"/>
<path d="M183 332 Q203 322 223 332 L226 438 L181 438Z" fill="#2030a0"/>
<rect x="191" y="438" width="9" height="81" fill="#d8a890"/>
<rect x="207" y="438" width="9" height="81" fill="#d8a890"/>
<rect x="189" y="514" width="28" height="10" fill="#2a2a2a"/>
<ellipse cx="249" cy="305" rx="14.25" ry="18.05" fill="#4a3420"/>
<ellipse cx="249" cy="310.7" rx="11.399999999999999" ry="14.25" fill="#e6b898"/>
<path d="M229 332 Q249 322 269 332 L272 438 L227 438Z" fill="#1a1a1a"/>
<rect x="237" y="438" width="9" height="81" fill="#d8a890"/>
<rect x="253" y="438" width="9" height="81" fill="#d8a890"/>
<rect x="235" y="514" width="28" height="10" fill="#2a2a2a"/>
<ellipse cx="296" cy="305" rx="14.25" ry="18.05" fill="#4a3420"/>
<ellipse cx="296" cy="310.7" rx="11.399999999999999" ry="14.25" fill="#e6b898"/>
<path d="M276 332 Q296 322 316 332 L318 438 L273 438Z" fill="#1a1a1a"/>
<rect x="283" y="438" width="9" height="81" fill="#d8a890"/>
<rect x="299" y="438" width="9" height="81" fill="#d8a890"/>
<rect x="281" y="514" width="28" height="10" fill="#2a2a2a"/>
<ellipse cx="342" cy="305" rx="14.25" ry="18.05" fill="#4a3420"/>
<ellipse cx="342" cy="310.7" rx="11.399999999999999" ry="14.25" fill="#e6b898"/>
<path d="M322 332 Q342 322 362 332 L364 438 L319 438Z" fill="#141414"/>
<rect x="329" y="438" width="9" height="81" fill="#d8a890"/>
<rect x="345" y="438" width="9" height="81" fill="#d8a890"/>
<rect x="327" y="514" width="28" height="10" fill="#2a2a2a"/>
<ellipse cx="388" cy="305" rx="14.25" ry="18.05" fill="#4a3420"/>
<ellipse cx="388" cy="310.7" rx="11.399999999999999" ry="14.25" fill="#e6b898"/>
<path d="M368 332 Q388 322 408 332 L411 438 L365 438Z" fill="#1a1a1a"/>
<rect x="375" y="438" width="9" height="81" fill="#d8a890"/>
<rect x="392" y="438" width="9" height="81" fill="#d8a890"/>
<rect x="374" y="514" width="28" height="10" fill="#2a2a2a"/>
<ellipse cx="434" cy="305" rx="14.25" ry="18.05" fill="#4a3420"/>
<ellipse cx="434" cy="310.7" rx="11.399999999999999" ry="14.25" fill="#e6b898"/>
<path d="M414 332 Q434 322 454 332 L457 438 L411 438Z" fill="#242424"/>
<rect x="422" y="438" width="9" height="81" fill="#d8a890"/>
<rect x="438" y="438" width="9" height="81" fill="#d8a890"/>
<rect x="420" y="514" width="28" height="10" fill="#2a2a2a"/>
<ellipse cx="480" cy="305" rx="14.25" ry="18.05" fill="#4a3420"/>
<ellipse cx="480" cy="310.7" rx="11.399999999999999" ry="14.25" fill="#e6b898"/>
<path d="M460 332 Q480 322 500 332 L503 438 L457 438Z" fill="#1a1a1a"/>
<rect x="468" y="438" width="9" height="81" fill="#d8a890"/>
<rect x="484" y="438" width="9" height="81" fill="#d8a890"/>
<rect x="466" y="514" width="28" height="10" fill="#2a2a2a"/>
<ellipse cx="526" cy="305" rx="14.25" ry="18.05" fill="#4a3420"/>
<ellipse cx="526" cy="310.7" rx="11.399999999999999" ry="14.25" fill="#e6b898"/>
<path d="M506 332 Q526 322 546 332 L549 438 L503 438Z" fill="#d8d0c8"/>
<rect x="514" y="438" width="9" height="81" fill="#d8a890"/>
<rect x="530" y="438" width="9" height="81" fill="#d8a890"/>
<rect x="512" y="514" width="28" height="10" fill="#2a2a2a"/>
<ellipse cx="572" cy="305" rx="14.25" ry="18.05" fill="#4a3420"/>
<ellipse cx="572" cy="310.7" rx="11.399999999999999" ry="14.25" fill="#e6b898"/>
<path d="M552 332 Q572 322 592 332 L595 438 L549 438Z" fill="#141414"/>
<rect x="560" y="438" width="9" height="81" fill="#d8a890"/>
<rect x="576" y="438" width="9" height="81" fill="#d8a890"/>
<rect x="558" y="514" width="28" height="10" fill="#2a2a2a"/>
<ellipse cx="618" cy="305" rx="14.25" ry="18.05" fill="#4a3420"/>
<ellipse cx="618" cy="310.7" rx="11.399999999999999" ry="14.25" fill="#e6b898"/>
<path d="M598 332 Q618 322 638 332 L641 438 L596 438Z" fill="#e08890"/>
<rect x="606" y="438" width="9" height="81" fill="#d8a890"/>
<rect x="622" y="438" width="9" height="81" fill="#d8a890"/>
<rect x="604" y="514" width="28" height="10" fill="#2a2a2a"/>
<ellipse cx="664" cy="305" rx="14.25" ry="18.05" fill="#4a3420"/>
<ellipse cx="664" cy="310.7" rx="11.399999999999999" ry="14.25" fill="#e6b898"/>
<path d="M644 332 Q664 322 684 332 L687 438 L642 438Z" fill="#6a5a9a"/>
<rect x="652" y="438" width="9" height="81" fill="#d8a890"/>
<rect x="668" y="438" width="9" height="81" fill="#d8a890"/>
<rect x="650" y="514" width="28" height="10" fill="#2a2a2a"/>
<ellipse cx="711" cy="305" rx="14.25" ry="18.05" fill="#4a3420"/>
<ellipse cx="711" cy="310.7" rx="11.399999999999999" ry="14.25" fill="#e6b898"/>
<path d="M691 332 Q711 322 731 332 L733 438 L688 438Z" fill="#1a1a1a"/>
<rect x="698" y="438" width="9" height="81" fill="#d8a890"/>
<rect x="714" y="438" width="9" height="81" fill="#d8a890"/>
<rect x="696" y="514" width="28" height="10" fill="#2a2a2a"/>
<ellipse cx="757" cy="305" rx="14.25" ry="18.05" fill="#4a3420"/>
<ellipse cx="757" cy="310.7" rx="11.399999999999999" ry="14.25" fill="#e6b898"/>
<path d="M737 332 Q757 322 777 332 L779 438 L734 438Z" fill="#9a9090"/>
<rect x="744" y="438" width="9" height="81" fill="#d8a890"/>
<rect x="760" y="438" width="9" height="81" fill="#d8a890"/>
<rect x="742" y="514" width="28" height="10" fill="#2a2a2a"/>
<ellipse cx="803" cy="305" rx="14.25" ry="18.05" fill="#4a3420"/>
<ellipse cx="803" cy="310.7" rx="11.399999999999999" ry="14.25" fill="#e6b898"/>
<path d="M783 332 Q803 322 823 332 L826 438 L780 438Z" fill="#3a40b0"/>
<rect x="790" y="438" width="9" height="81" fill="#d8a890"/>
<rect x="807" y="438" width="9" height="81" fill="#d8a890"/>
<rect x="789" y="514" width="28" height="10" fill="#2a2a2a"/>
<ellipse cx="849" cy="305" rx="14.25" ry="18.05" fill="#4a3420"/>
<ellipse cx="849" cy="310.7" rx="11.399999999999999" ry="14.25" fill="#e6b898"/>
<path d="M829 332 Q849 322 869 332 L872 438 L826 438Z" fill="#2a5ad0"/>
<rect x="837" y="438" width="9" height="81" fill="#d8a890"/>
<rect x="853" y="438" width="9" height="81" fill="#d8a890"/>
<rect x="835" y="514" width="28" height="10" fill="#2a2a2a"/>
<ellipse cx="895" cy="305" rx="14.25" ry="18.05" fill="#4a3420"/>
<ellipse cx="895" cy="310.7" rx="11.399999999999999" ry="14.25" fill="#e6b898"/>
<path d="M875 332 Q895 322 915 332 L918 438 L872 438Z" fill="#1a1a1a"/>
<rect x="883" y="438" width="9" height="81" fill="#d8a890"/>
<rect x="899" y="438" width="9" height="81" fill="#d8a890"/>
<rect x="881" y="514" width="28" height="10" fill="#2a2a2a"/>
</svg>
<svg x="484" y="474" width="147" height="103" viewBox="25 25 895 630" preserveAspectRatio="none" overflow="hidden">
<defs>
<radialGradient id="p7a" cx="0.5" cy="0.5" r="0.5"><stop offset="0" stop-color="#d860e8"/><stop offset="1" stop-color="#c050d0" stop-opacity="0"/></radialGradient>
<radialGradient id="p7b" cx="0.5" cy="0.5" r="0.5"><stop offset="0" stop-color="#f0fff0"/><stop offset="0.5" stop-color="#a0e0c0" stop-opacity="0.7"/><stop offset="1" stop-color="#80c0a0" stop-opacity="0"/></radialGradient>
<radialGradient id="p7c" cx="0.5" cy="0.5" r="0.5"><stop offset="0" stop-color="#e8a850"/><stop offset="1" stop-color="#d89040" stop-opacity="0"/></radialGradient>
<radialGradient id="p7d" cx="0.5" cy="0.5" r="0.5"><stop offset="0" stop-color="#f0ff60"/><stop offset="0.6" stop-color="#a0e080" stop-opacity="0.6"/><stop offset="1" stop-color="#60c0a0" stop-opacity="0"/></radialGradient>
<linearGradient id="p7bg" x1="0" y1="0" x2="0" y2="1"><stop offset="0" stop-color="#9a40b8"/><stop offset="0.18" stop-color="#6a2a88"/><stop offset="0.35" stop-color="#2e1840"/><stop offset="0.6" stop-color="#3a1e50"/><stop offset="1" stop-color="#1c1430"/></linearGradient>
<filter id="p7f"><feGaussianBlur stdDeviation="8"/></filter>
<filter id="p7g"><feGaussianBlur stdDeviation="3"/></filter>
</defs>
<rect x="25" y="25" width="895" height="630" fill="url(#p7bg)"/>
<g filter="url(#p7f)">
<ellipse cx="250" cy="70" rx="260" ry="70" fill="url(#p7a)"/>
<ellipse cx="600" cy="60" rx="200" ry="50" fill="url(#p7a)" opacity="0.8"/>
<rect x="40" y="60" width="30" height="100" fill="#c070d0" opacity="0.5"/>
<rect x="140" y="50" width="25" height="80" fill="#d080e0" opacity="0.6"/>
<ellipse cx="510" cy="130" rx="110" ry="60" fill="url(#p7b)"/>
<ellipse cx="820" cy="170" rx="140" ry="110" fill="url(#p7c)"/>
<path d="M25 655 L90 420 L240 420 L150 655Z" fill="#b8c8ff" opacity="0.7"/>
<path d="M170 655 L260 420 L330 420 L300 655Z" fill="#7080e0" opacity="0.3"/>
<path d="M380 655 L460 400 L560 400 L590 655Z" fill="#c8f0a0" opacity="0.55"/>
<path d="M520 655 L560 420 L640 420 L700 655Z" fill="#90b0f0" opacity="0.5"/>
<path d="M640 655 L640 440 L800 440 L920 600 L920 655Z" fill="#6a5ab0" opacity="0.3"/>
<ellipse cx="480" cy="590" rx="70" ry="65" fill="url(#p7d)"/>
<ellipse cx="120" cy="470" rx="90" ry="50" fill="#d0d8ff" opacity="0.55"/>
<ellipse cx="700" cy="560" rx="120" ry="40" fill="#4a3a80" opacity="0.5"/>
</g>
<g filter="url(#p7g)">
<ellipse cx="105" cy="225" rx="22" ry="28" fill="#2a1a2a"/>
<path d="M60 260 Q105 240 150 260 L155 350 L55 350Z" fill="#e8d8f0"/>
<path d="M70 350 L105 350 L100 500 L80 500Z" fill="#1a1a30"/>
<path d="M108 350 L140 350 L150 490 L125 490Z" fill="#1a1a30"/>
<ellipse cx="205" cy="190" rx="22" ry="28" fill="#2a1a2a"/>
<path d="M160 220 Q205 200 250 220 L255 330 L160 330Z" fill="#ecdcf0"/>
<path d="M175 330 L208 330 L200 490 L182 490Z" fill="#141428"/>
<path d="M212 330 L245 330 L258 480 L236 480Z" fill="#141428"/>
<ellipse cx="330" cy="215" rx="35" ry="30" fill="#2a1a20"/>
<path d="M270 240 L390 240 L380 350 L280 350Z" fill="#2a1820"/>
<path d="M295 350 L320 350 L312 490 L298 490Z" fill="#3a2030"/>
<path d="M335 350 L360 350 L355 490 L340 490Z" fill="#3a2030"/>
<ellipse cx="435" cy="220" rx="22" ry="28" fill="#4a2a30"/>
<path d="M400 240 L465 240 L470 340 L410 340Z" fill="#2a1820"/>
<path d="M418 340 L438 340 L430 450 L420 450Z" fill="#3a2030"/>
<path d="M445 340 L462 340 L465 440 L452 440Z" fill="#3a2030"/>
<ellipse cx="630" cy="215" rx="20" ry="26" fill="#2a1a2a"/>
<path d="M595 240 L660 240 L650 360 L600 360Z" fill="#241820"/>
<path d="M605 360 L625 360 L615 460 L605 460Z" fill="#241820"/>
<ellipse cx="700" cy="190" rx="22" ry="26" fill="#1a1018"/>
<path d="M650 220 Q700 205 745 225 L745 360 L650 360Z" fill="#ecdcec"/>
<path d="M655 360 L695 360 L680 520 L660 520Z" fill="#141420"/>
<path d="M700 360 L740 360 L745 500 L725 500Z" fill="#141420"/>
<ellipse cx="770" cy="210" rx="20" ry="26" fill="#3a2a2a"/>
<path d="M740 240 L800 240 L800 420 L745 420Z" fill="#b8a0b8" opacity="0.8"/>
<ellipse cx="850" cy="215" rx="22" ry="28" fill="#2a1a1a"/>
<path d="M800 250 L890 250 L880 420 L810 420Z" fill="#201418"/>
<ellipse cx="895" cy="190" rx="20" ry="26" fill="#3a2418"/>
<path d="M870 230 L920 230 L920 430 L870 430Z" fill="#281818"/>
<ellipse cx="550" cy="115" rx="8" ry="8" fill="#fff"/><ellipse cx="470" cy="115" rx="8" ry="8" fill="#fff"/><ellipse cx="515" cy="105" rx="7" ry="7" fill="#fff"/>
</g>
</svg>
<circle cx="558.5" cy="370" r="46.5" fill="none" stroke="#333" stroke-width="1"/>
<path d="M536 370.5H582M558.5 348V393" stroke="#777" stroke-width="1.5"/>
<text x="476.5" y="269.5" font-size="23" font-weight="bold" text-anchor="middle" fill="#c8c8c8">S</text>
<text x="475" y="267.9" font-size="23" font-weight="bold" text-anchor="middle" fill="#808080">S</text>
<text x="476.5" y="294.4" font-size="23" font-weight="bold" text-anchor="middle" fill="#c8c8c8">T</text>
<text x="475" y="292.8" font-size="23" font-weight="bold" text-anchor="middle" fill="#808080">T</text>
<text x="476.5" y="321.1" font-size="23" font-weight="bold" text-anchor="middle" fill="#c8c8c8">U</text>
<text x="475" y="319.5" font-size="23" font-weight="bold" text-anchor="middle" fill="#808080">U</text>
<text x="476.5" y="347.1" font-size="23" font-weight="bold" text-anchor="middle" fill="#c8c8c8">D</text>
<text x="475" y="345.5" font-size="23" font-weight="bold" text-anchor="middle" fill="#808080">D</text>
<text x="476.5" y="373.1" font-size="23" font-weight="bold" text-anchor="middle" fill="#c8c8c8">N</text>
<text x="475" y="371.5" font-size="23" font-weight="bold" text-anchor="middle" fill="#808080">N</text>
<text x="476.5" y="400.1" font-size="23" font-weight="bold" text-anchor="middle" fill="#c8c8c8">I</text>
<text x="475" y="398.5" font-size="23" font-weight="bold" text-anchor="middle" fill="#808080">I</text>
<text x="476.5" y="427.1" font-size="23" font-weight="bold" text-anchor="middle" fill="#c8c8c8">Ó</text>
<text x="475" y="425.5" font-size="23" font-weight="bold" text-anchor="middle" fill="#808080">Ó</text>
<text x="476.5" y="453.1" font-size="23" font-weight="bold" text-anchor="middle" fill="#c8c8c8">W</text>
<text x="475" y="451.5" font-size="23" font-weight="bold" text-anchor="middle" fill="#808080">W</text>
<text x="476.5" y="479.1" font-size="23" font-weight="bold" text-anchor="middle" fill="#c8c8c8">K</text>
<text x="475" y="477.5" font-size="23" font-weight="bold" text-anchor="middle" fill="#808080">K</text>
<text x="476.5" y="504.1" font-size="23" font-weight="bold" text-anchor="middle" fill="#c8c8c8">A</text>
<text x="475" y="502.5" font-size="23" font-weight="bold" text-anchor="middle" fill="#808080">A</text>
<text x="682" y="291" font-size="16" font-weight="bold" text-anchor="middle" fill="#bdbdbd">LXXIII Liceum</text>
<text x="682.5" y="310.5" font-size="16" font-weight="bold" text-anchor="middle" fill="#bdbdbd">Ogólnokształcące</text>
<text x="686" y="328.5" font-size="16" font-weight="bold" text-anchor="middle" fill="#bdbdbd">im. Zawiszaków</text>
<text x="687.7" y="347" font-size="16" font-weight="bold" text-anchor="middle" fill="#bdbdbd">Proporca "Victoria"</text>
<text x="557.3" y="449.7" font-size="16" font-weight="bold" text-anchor="middle" fill="#6e6e6e">17 stycznia 2014r.</text>
<text x="557.3" y="468.3" font-size="16" font-weight="bold" text-anchor="middle" fill="#6e6e6e">Hotel "Hrabski"</text>
<text x="555" y="590" font-size="11.8" text-anchor="middle" fill="#777">Zdjęcia: Piotr Margas - FotoUrsus</text>
<text x="555.5" y="602.7" font-size="11.8" text-anchor="middle" fill="#777">www.fotoursus.pl</text>
<text x="0" y="3.38" font-size="13" font-weight="bold" text-anchor="middle" fill="#111" transform="translate(340 269.8) rotate(-244.6)">w</text>
<text x="0" y="3.38" font-size="13" font-weight="bold" text-anchor="middle" fill="#111" transform="translate(329.6 295) rotate(-251.1)">w</text>
<text x="0" y="3.38" font-size="13" font-weight="bold" text-anchor="middle" fill="#111" transform="translate(322.2 320.2) rotate(-257.5)">w</text>
<text x="0" y="0.65" font-size="13" font-weight="bold" text-anchor="middle" fill="#111" transform="translate(314.8 342.7) rotate(-263.0)">.</text>
<text x="0" y="3.38" font-size="13" font-weight="bold" text-anchor="middle" fill="#111" transform="translate(315.6 364.8) rotate(-268.3)">a</text>
<text x="0" y="2.02" font-size="13" font-weight="bold" text-anchor="middle" fill="#111" transform="translate(314.8 389.3) rotate(85.9)">g</text>
<text x="0" y="3.38" font-size="13" font-weight="bold" text-anchor="middle" fill="#111" transform="translate(318.5 413) rotate(80.2)">v</text>
<text x="0" y="4.68" font-size="13" font-weight="bold" text-anchor="middle" fill="#111" transform="translate(324.2 435.6) rotate(74.6)">i</text>
<text x="0" y="4.68" font-size="13" font-weight="bold" text-anchor="middle" fill="#111" transform="translate(331.2 457.8) rotate(69.0)">d</text>
<text x="0" y="3.38" font-size="13" font-weight="bold" text-anchor="middle" fill="#111" transform="translate(339.3 480.8) rotate(63.2)">e</text>
<text x="0" y="3.38" font-size="13" font-weight="bold" text-anchor="middle" fill="#111" transform="translate(351.2 501.7) rotate(57.5)">o</text>
<text x="0" y="0.65" font-size="13" font-weight="bold" text-anchor="middle" fill="#111" transform="translate(361.3 521.8) rotate(52.3)">.</text>
<text x="0" y="2.02" font-size="13" font-weight="bold" text-anchor="middle" fill="#111" transform="translate(377.9 538) rotate(46.9)">p</text>
<text x="0" y="4.68" font-size="13" font-weight="bold" text-anchor="middle" fill="#111" transform="translate(395.1 553.4) rotate(41.4)">l</text>
<text x="0" y="4.65" font-size="13" font-weight="bold" text-anchor="middle" fill="#111" transform="translate(770 267.4) rotate(-115.9)">1</text>
<text x="0" y="4.65" font-size="13" font-weight="bold" text-anchor="middle" fill="#111" transform="translate(780 289.4) rotate(-110.2)">2</text>
<text x="0" y="3.90" font-size="13" font-weight="bold" text-anchor="middle" fill="#111" transform="translate(788 310) rotate(-104.9)">-</text>
<text x="0" y="4.65" font-size="13" font-weight="bold" text-anchor="middle" fill="#111" transform="translate(793 332) rotate(-99.5)">9</text>
<text x="0" y="4.65" font-size="13" font-weight="bold" text-anchor="middle" fill="#111" transform="translate(795 356) rotate(-93.8)">7</text>
<text x="0" y="3.90" font-size="13" font-weight="bold" text-anchor="middle" fill="#111" transform="translate(796.4 379) rotate(-88.3)">-</text>
<text x="0" y="4.65" font-size="13" font-weight="bold" text-anchor="middle" fill="#111" transform="translate(794.9 401.6) rotate(-83.0)">9</text>
<text x="0" y="4.65" font-size="13" font-weight="bold" text-anchor="middle" fill="#111" transform="translate(790.7 425.4) rotate(-77.2)">7</text>
<text x="0" y="3.90" font-size="13" font-weight="bold" text-anchor="middle" fill="#111" transform="translate(786.6 447.1) rotate(-72.0)">-</text>
<text x="0" y="4.65" font-size="13" font-weight="bold" text-anchor="middle" fill="#111" transform="translate(778.3 467.8) rotate(-66.8)">2</text>
<text x="0" y="4.65" font-size="13" font-weight="bold" text-anchor="middle" fill="#111" transform="translate(766.9 489.6) rotate(-61.0)">0</text>
<text x="0" y="4.65" font-size="13" font-weight="bold" text-anchor="middle" fill="#111" transform="translate(754.5 510.3) rotate(-55.3)">6</text>
</svg>
<div class="a" style="left:1102px;top:72px;width:98px;height:592px;background:linear-gradient(90deg,#e3e6e9 0%,#d9dde5 35%,#b4c0de 80%,#a9b7dd 100%);border-left:1px solid #a8a8a8"></div>
<div class="a" style="left:1102px;top:72px;width:98px;height:3px;background:#e4e4e4"></div>
<!-- printer combo -->
<div class="a" style="left:1109px;top:83px;width:84px;height:12px;background:#fff;border:1px solid #707070"><span class="t" style="left:2px;top:2.5px;font-size:6.5px;color:#111">Canon MG5200 series F</span><svg class="a" style="left:75px;top:1px" width="8" height="9"><rect x="0" y="0" width="8" height="9" fill="#fff"/><path d="M1 3H7L4 6.5Z" fill="#000"/></svg></div>
<!-- print button -->
<div class="a" style="left:1107px;top:97px;width:88px;height:30px;border:1px solid #cfd4e0;background:linear-gradient(90deg,#e4e6ea,#d6dbe6 50%,#c0c9e0)"></div>
<div class="a" style="left:1109px;top:99px;width:84px;height:26px;border:1px solid #b9bfcc;background:linear-gradient(90deg,#e2e4e8,#d4d9e4 50%,#bcc6df)"></div>
<svg class="a" style="left:1114px;top:103px" width="20" height="16" viewBox="0 0 20 16"><path d="M3 8 L10 2 L17 7 L17 11 L10 15 L3 12Z" fill="#c8c8c8" stroke="#505050" stroke-width="1"/><path d="M10 2 L17 7 L10 11 L3 8Z" fill="#e8e8e8" stroke="#606060" stroke-width="0.8"/><rect x="11" y="1" width="5" height="4" fill="#3a3a3a" transform="rotate(30 13 3)"/><path d="M2 11 L6 10 L7 14 L3 15Z" fill="#c8c040" stroke="#505030" stroke-width="0.6"/></svg>
<span class="t" style="left:1137.5px;top:109px;font-size:6.7px;color:#111">Print</span>
<!-- preview button -->
<div class="a" style="left:1107px;top:139px;width:88px;height:25px;border:1px solid #cfd4e0;background:linear-gradient(90deg,#e4e6ea,#d6dbe6 50%,#c0c9e0)"></div>
<div class="a" style="left:1109px;top:141px;width:84px;height:21px;border:1px solid #b9bfcc;background:linear-gradient(90deg,#e2e4e8,#d4d9e4 50%,#bcc6df)"></div>
<svg class="a" style="left:1115px;top:144px" width="19" height="15" viewBox="0 0 19 15"><rect x="1" y="1" width="10" height="13" fill="#8aa070" stroke="#303030" stroke-width="1"/><rect x="2" y="2" width="4" height="5" fill="#30a050"/><rect x="6" y="7" width="4" height="6" fill="#c86040"/><rect x="2" y="8" width="4" height="5" fill="#e0e0c0"/><path d="M10 9 L17 5 L18 7 L11 11Z" fill="#303040"/><path d="M10 9 L13 8 L13 10Z" fill="#d03070"/></svg>
<span class="t" style="left:1138px;top:149px;font-size:6.7px;color:#111">Preview</span>
<!-- paper image header -->
<div class="a" style="left:1103px;top:172px;width:95px;height:13px;background:linear-gradient(90deg,#dfe2e8,#cdd3e2 60%,#b8c3de)"></div>
<span class="t" style="left:1106.5px;top:175px;font-size:6.5px;color:#111">Paper Image</span>
<svg class="a" style="left:1186px;top:175px" width="8" height="7"><path d="M1 3.5L4 1L7 3.5M1 6.5L4 4L7 6.5" stroke="#333" stroke-width="1" fill="none"/></svg>
<div class="a" style="left:1104px;top:185px;width:93px;height:84px;background:linear-gradient(90deg,#dcdfe6,#d2d7e3 60%,#c2cbe1);border-right:1px solid #f4f4f8"></div>
<div class="a" style="left:1130px;top:186px;width:42px;height:81px;background:#fff;border:1px solid #505050;border-right:2px solid #505050;border-bottom:2px solid #505050"></div>
<svg class="a" style="left:1131px;top:213px" width="40" height="40"><circle cx="19" cy="19.5" r="17.5" fill="#f6d8ca" stroke="#5a4a48" stroke-width="1"/><circle cx="19" cy="19.5" r="2.6" fill="#f6d8ca" stroke="#4a3a38" stroke-width="1"/></svg>
<!-- adjust button -->
<div class="a" style="left:1108px;top:275px;width:87px;height:16px;border:1px solid #c2c8d6;background:linear-gradient(90deg,#e0e2e8,#d2d7e2 50%,#bcc5dc)"></div>
<span class="t" style="left:1123.5px;top:280px;font-size:6.5px;color:#111">Adjust Circle Size...</span>
<div class="a" style="left:1108px;top:295px;width:87px;height:16px;border:1px solid #c8cdd8;background:linear-gradient(90deg,#e0e2e8,#d4d9e4 50%,#bec7de)"></div>
<span class="t" style="left:1123px;top:300px;font-size:6.5px;color:#b4b8c2">Background Tra...</span>

<div class="a" style="left:0;top:648px;width:1102px;height:1px;background:#fafafa"></div>
<div class="a" style="left:48px;top:649px;width:1054px;height:1px;background:#9a9a9a"></div>
<div class="a" style="left:1px;top:650px;width:48px;height:13px;background:#f4f4f4;border-right:1px solid #6a6a6a;border-bottom:1px solid #6a6a6a;border-left:1px solid #fff"><span class="t" style="left:4px;top:3.5px;font-size:6.6px;color:#000;-webkit-text-stroke:0.15px #000">New Sheet 1</span></div>

<div class="a" style="left:0;top:672px;width:1200px;height:1px;background:#f8f8f8"></div>
<div class="a" style="left:0;top:673px;width:1200px;height:2px;background:#8a8d94"></div>

<div id="status" class="a">
 <div class="sp" style="left:0;width:74px"><span class="t">Mouse(82.8mm,21.8mm)</span></div>
 <div class="sp" style="left:75px;width:11px"></div>
 <div class="sp" style="left:87px;width:161px"></div>
 <div class="sp" style="left:249px;width:38px"></div>
 <div class="sp" style="left:288px;width:65px"></div>
 <div class="sp" style="left:354px;width:20px"><span class="t">198%</span></div>
 <div class="sp" style="left:375px;width:825px"><span class="t">New Sheet 1</span></div>
</div>
<svg class="a" style="left:1098px;top:636px" width="102" height="36" viewBox="0 0 102 36">
<defs><filter id="wmsh" x="-20%" y="-20%" width="140%" height="140%"><feGaussianBlur stdDeviation="1"/></filter></defs>
<text x="7.5" y="29.5" font-size="25" font-weight="bold" fill="#707480" stroke="#707480" stroke-width="1.6" letter-spacing="-0.2" opacity="0.7" filter="url(#wmsh)" font-family="Liberation Sans">Lento</text>
<text x="6" y="27.5" font-size="25" font-weight="bold" fill="#fff" stroke="#fff" stroke-width="1.6" letter-spacing="-0.2" font-family="Liberation Sans">Lento</text>
<path d="M85 12 A8.5 8.5 0 1 1 83.5 28.7 L82 31.5 L80.5 27.3 A8.5 8.5 0 0 1 85 12Z" fill="#de3f1c"/>
<text x="85.3" y="24" font-size="9" font-weight="bold" fill="#fff" text-anchor="middle" font-family="Liberation Sans">pl</text>
</svg>

</body></html>
